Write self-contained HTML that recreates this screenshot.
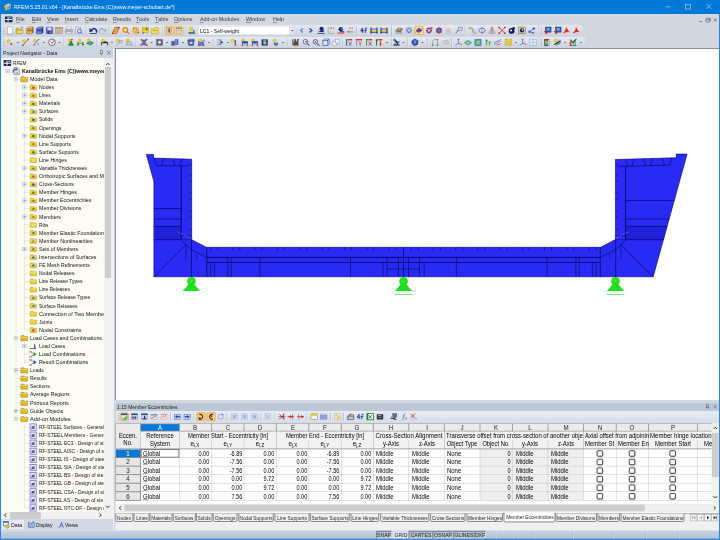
<!DOCTYPE html>
<html><head><meta charset="utf-8"><title>RFEM</title>
<style>
html,body{margin:0;padding:0;}
body{width:720px;height:540px;overflow:hidden;position:relative;background:#d2d6df;font-family:"Liberation Sans",sans-serif;font-size:6.2px;color:#1a1a1a;}
.b{position:absolute;box-sizing:border-box;}
.t{position:absolute;white-space:pre;line-height:8px;height:8px;transform-origin:0 0;transform:scaleX(0.88);font-size:6.1px;color:#111;}
.a{transform:none;}
svg{position:absolute;left:0;top:0;overflow:visible;}
u{text-decoration:none;border-bottom:1px solid rgba(0,0,0,.32);display:inline-block;line-height:0.8em;}
.sb{font-size:4.6px;position:relative;top:1px;}
</style></head><body><div id="root" style="position:absolute;left:0;top:0;width:720px;height:540px;overflow:hidden;will-change:transform">

<div class="b" style="left:0px;top:0px;width:720px;height:14px;background:#0078d7;"></div>
<div class="t " style="left:13.7px;top:2.6px;transform:scaleX(0.857);color:#fff;">RFEM 5.25.01 x64 - [Kanalbrücke Ems (C))www.meyer-schubart.de*]</div>
<div class="b" style="left:0px;top:14px;width:720px;height:11px;background:#d3d7e0;"></div>
<div class="t " style="left:16px;top:15.2px;color:#383838;"><u>F</u>ile</div>
<div class="t " style="left:31.5px;top:15.2px;color:#383838;"><u>E</u>dit</div>
<div class="t " style="left:47px;top:15.2px;color:#383838;"><u>V</u>iew</div>
<div class="t " style="left:65px;top:15.2px;color:#383838;"><u>I</u>nsert</div>
<div class="t " style="left:85px;top:15.2px;color:#383838;"><u>C</u>alculate</div>
<div class="t " style="left:113px;top:15.2px;color:#383838;"><u>R</u>esults</div>
<div class="t " style="left:136px;top:15.2px;color:#383838;"><u>T</u>ools</div>
<div class="t " style="left:155px;top:15.2px;color:#383838;"><u>T</u>able</div>
<div class="t " style="left:174px;top:15.2px;color:#383838;"><u>O</u>ptions</div>
<div class="t " style="left:200px;top:15.2px;color:#383838;"><u>A</u>dd-on Modules</div>
<div class="t " style="left:246px;top:15.2px;color:#383838;"><u>W</u>indow</div>
<div class="t " style="left:272.5px;top:15.2px;color:#383838;"><u>H</u>elp</div>
<div class="b" style="left:0px;top:25px;width:720px;height:23px;background:#d2d6df;"></div>
<svg width="720" height="540" viewBox="0 0 720 540"><g stroke="#fff" stroke-width="0.5" fill="none" stroke-opacity="0.9"><path d="M665.5 6.8 H670.5"/><rect x="685.6" y="4.2" width="4.8" height="4.8"/><path d="M706.4 4 L711.4 9 M711.4 4 L706.4 9"/></g><path d="M5.4 5 L8.4 3.4 L11 5 L10.6 8.6 L7.6 10.4 L5 8.6Z" fill="#9a9ea8"/><path d="M5.4 5 L8.4 3.4 L11 5 L8 6.4Z" fill="#c4c8d0"/><path d="M8.6 5.6 q1.4 0.6 0.4 2.4" stroke="#5a7ac8" stroke-width="0.8" fill="none"/><path d="M4.4 6.4 q1.8 -1.2 2.4 0.6 q0.2 2 -2 3.2" stroke="#e8c020" stroke-width="1.1" fill="none"/><circle cx="5" cy="6.8" r="0.9" fill="#f0d040"/><rect x="5" y="16.4" width="7.4" height="5.8" rx="0.5" fill="#1a2060"/><rect x="5.4" y="19" width="6.6" height="0.9" fill="#fff"/><rect x="7.6" y="16.8" width="0.9" height="5" fill="#fff"/><rect x="9.3" y="17.2" width="2" height="1.1" fill="#c8cce8"/><g stroke="#555" stroke-width="0.6" fill="none"><path d="M699.2 21.6 H702.2"/><rect x="706" y="19.2" width="3.2" height="2.8"/><path d="M707 19.2 V18.2 H710.4 V21 H709.2"/><path d="M713.6 18.4 L716.8 21.8 M716.8 18.4 L713.6 21.8"/></g></svg>
<!--ICONS-->
<div class="t " style="left:200px;top:26.6px;transform:scaleX(0.835);color:#111;z-index:5;">LC1 - Self-weight</div>
<div class="b" style="left:1px;top:48px;width:112px;height:9.5px;background:#cdd5e2;"></div>
<div class="t " style="left:2.5px;top:49.2px;transform:scaleX(0.835);color:#222;">Project Navigator - Data</div>
<div class="b" style="left:1px;top:57.5px;width:103.2px;height:454px;background:#fcfbf4;"></div>
<div class="b" style="left:104.2px;top:57.5px;width:8.5px;height:461.5px;background:#f0f0f0;"></div>
<div class="b" style="left:112.7px;top:48.5px;width:0.8px;height:482px;background:#e6ebf4;"></div>
<div class="b" style="left:104.6px;top:67px;width:6.3px;height:211px;background:#cdcdcd;"></div>
<div class="b" style="left:1px;top:511.5px;width:111.6px;height:7.5px;background:#f0f0f0;"></div>
<div class="b" style="left:9.6px;top:512px;width:31px;height:6.5px;background:#cdcdcd;"></div>
<div class="b" style="left:1px;top:57.5px;width:103.2px;height:454px;overflow:hidden">
<div class="t" style="left:12.2px;top:1.30px;transform:scaleX(0.782);">RFEM</div>
<div class="t" style="left:20.7px;top:9.39px;transform:scaleX(0.855);font-weight:bold;">Kanalbrücke Ems (C))www.meyer</div>
<div class="t" style="left:29px;top:17.48px;transform:scaleX(0.882);">Model Data</div>
<div class="t" style="left:37.8px;top:25.57px;transform:scaleX(0.851);">Nodes</div>
<div class="t" style="left:37.8px;top:33.66px;transform:scaleX(0.803);">Lines</div>
<div class="t" style="left:37.8px;top:41.75px;transform:scaleX(0.857);">Materials</div>
<div class="t" style="left:37.8px;top:49.84px;transform:scaleX(0.810);">Surfaces</div>
<div class="t" style="left:37.8px;top:57.93px;transform:scaleX(0.825);">Solids</div>
<div class="t" style="left:37.8px;top:66.02px;transform:scaleX(0.862);">Openings</div>
<div class="t" style="left:37.8px;top:74.11px;transform:scaleX(0.869);">Nodal Supports</div>
<div class="t" style="left:37.8px;top:82.20px;transform:scaleX(0.851);">Line Supports</div>
<div class="t" style="left:37.8px;top:90.29px;transform:scaleX(0.847);">Surface Supports</div>
<div class="t" style="left:37.8px;top:98.38px;transform:scaleX(0.867);">Line Hinges</div>
<div class="t" style="left:37.8px;top:106.47px;transform:scaleX(0.835);">Variable Thicknesses</div>
<div class="t" style="left:37.8px;top:114.56px;transform:scaleX(0.872);">Orthotropic Surfaces and M</div>
<div class="t" style="left:37.8px;top:122.65px;transform:scaleX(0.844);">Cross-Sections</div>
<div class="t" style="left:37.8px;top:130.74px;transform:scaleX(0.881);">Member Hinges</div>
<div class="t" style="left:37.8px;top:138.83px;transform:scaleX(0.876);">Member Eccentricities</div>
<div class="t" style="left:37.8px;top:146.92px;transform:scaleX(0.875);">Member Divisions</div>
<div class="t" style="left:37.8px;top:155.01px;transform:scaleX(0.866);">Members</div>
<div class="t" style="left:37.8px;top:163.10px;transform:scaleX(0.778);">Ribs</div>
<div class="t" style="left:37.8px;top:171.19px;transform:scaleX(0.875);">Member Elastic Foundation</div>
<div class="t" style="left:37.8px;top:179.28px;transform:scaleX(0.881);">Member Nonlinearities</div>
<div class="t" style="left:37.8px;top:187.37px;transform:scaleX(0.851);">Sets of Members</div>
<div class="t" style="left:37.8px;top:195.46px;transform:scaleX(0.856);">Intersections of Surfaces</div>
<div class="t" style="left:37.8px;top:203.55px;transform:scaleX(0.841);">FE Mesh Refinements</div>
<div class="t" style="left:37.8px;top:211.64px;transform:scaleX(0.823);">Nodal Releases</div>
<div class="t" style="left:37.8px;top:219.73px;transform:scaleX(0.812);">Line Release Types</div>
<div class="t" style="left:37.8px;top:227.82px;transform:scaleX(0.800);">Line Releases</div>
<div class="t" style="left:37.8px;top:235.91px;transform:scaleX(0.814);">Surface Release Types</div>
<div class="t" style="left:37.8px;top:244.00px;transform:scaleX(0.798);">Surface Releases</div>
<div class="t" style="left:37.8px;top:252.09px;transform:scaleX(0.898);">Connection of Two Membe</div>
<div class="t" style="left:37.8px;top:260.18px;transform:scaleX(0.829);">Joints</div>
<div class="t" style="left:37.8px;top:268.27px;transform:scaleX(0.877);">Nodal Constraints</div>
<div class="t" style="left:29px;top:276.36px;transform:scaleX(0.864);">Load Cases and Combinations</div>
<div class="t" style="left:37.8px;top:284.45px;transform:scaleX(0.805);">Load Cases</div>
<div class="t" style="left:37.8px;top:292.54px;transform:scaleX(0.885);">Load Combinations</div>
<div class="t" style="left:37.8px;top:300.63px;transform:scaleX(0.875);">Result Combinations</div>
<div class="t" style="left:29px;top:308.72px;transform:scaleX(0.831);">Loads</div>
<div class="t" style="left:29px;top:316.81px;transform:scaleX(0.822);">Results</div>
<div class="t" style="left:29px;top:324.90px;transform:scaleX(0.843);">Sections</div>
<div class="t" style="left:29px;top:332.99px;transform:scaleX(0.851);">Average Regions</div>
<div class="t" style="left:29px;top:341.08px;transform:scaleX(0.879);">Printout Reports</div>
<div class="t" style="left:29px;top:349.17px;transform:scaleX(0.862);">Guide Objects</div>
<div class="t" style="left:29px;top:357.26px;transform:scaleX(0.915);">Add-on Modules</div>
<div class="t" style="left:37.8px;top:365.35px;transform:scaleX(0.790);">RF-STEEL Surfaces - General s</div>
<div class="t" style="left:37.8px;top:373.44px;transform:scaleX(0.820);">RF-STEEL Members - General</div>
<div class="t" style="left:37.8px;top:381.53px;transform:scaleX(0.805);">RF-STEEL EC3 - Design of st</div>
<div class="t" style="left:37.8px;top:389.62px;transform:scaleX(0.805);">RF-STEEL AISC - Design of s</div>
<div class="t" style="left:37.8px;top:397.71px;transform:scaleX(0.805);">RF-STEEL IS - Design of stee</div>
<div class="t" style="left:37.8px;top:405.80px;transform:scaleX(0.805);">RF-STEEL SIA - Design of ste</div>
<div class="t" style="left:37.8px;top:413.89px;transform:scaleX(0.805);">RF-STEEL BS - Design of ste</div>
<div class="t" style="left:37.8px;top:421.98px;transform:scaleX(0.805);">RF-STEEL GB - Design of ste</div>
<div class="t" style="left:37.8px;top:430.07px;transform:scaleX(0.805);">RF-STEEL CSA - Design of st</div>
<div class="t" style="left:37.8px;top:438.16px;transform:scaleX(0.805);">RF-STEEL AS - Design of ste</div>
<div class="t" style="left:37.8px;top:446.25px;transform:scaleX(0.805);">RF-STEEL NTC-DF - Design o</div>
</div>
<div class="b" style="left:1px;top:519px;width:112px;height:11.5px;background:#d2d8e4;"></div>
<div class="b" style="left:2px;top:519.6px;width:22px;height:9.8px;background:#e9edf4;"></div>
<div class="t " style="left:10.5px;top:520.8px;">Data</div>
<div class="t " style="left:35.5px;top:520.8px;transform:scaleX(0.820);">Display</div>
<div class="t " style="left:64.5px;top:520.8px;transform:scaleX(0.810);">Views</div>
<svg width="720" height="540" viewBox="0 0 720 540">
<line x1="7.6" y1="67.0" x2="7.6" y2="71.1" stroke="#b0b0a8" stroke-width="0.5" stroke-dasharray="0.5 0.5"/>
<line x1="16" y1="75.1" x2="16" y2="419.0" stroke="#b0b0a8" stroke-width="0.5" stroke-dasharray="0.5 0.5"/>
<line x1="16" y1="79.2" x2="20.6" y2="79.2" stroke="#b0b0a8" stroke-width="0.5" stroke-dasharray="0.5 0.5"/>
<line x1="16" y1="338.1" x2="20.6" y2="338.1" stroke="#b0b0a8" stroke-width="0.5" stroke-dasharray="0.5 0.5"/>
<line x1="16" y1="370.4" x2="20.6" y2="370.4" stroke="#b0b0a8" stroke-width="0.5" stroke-dasharray="0.5 0.5"/>
<line x1="16" y1="378.5" x2="20.6" y2="378.5" stroke="#b0b0a8" stroke-width="0.5" stroke-dasharray="0.5 0.5"/>
<line x1="16" y1="386.6" x2="20.6" y2="386.6" stroke="#b0b0a8" stroke-width="0.5" stroke-dasharray="0.5 0.5"/>
<line x1="16" y1="394.7" x2="20.6" y2="394.7" stroke="#b0b0a8" stroke-width="0.5" stroke-dasharray="0.5 0.5"/>
<line x1="16" y1="402.8" x2="20.6" y2="402.8" stroke="#b0b0a8" stroke-width="0.5" stroke-dasharray="0.5 0.5"/>
<line x1="16" y1="410.9" x2="20.6" y2="410.9" stroke="#b0b0a8" stroke-width="0.5" stroke-dasharray="0.5 0.5"/>
<line x1="16" y1="419.0" x2="20.6" y2="419.0" stroke="#b0b0a8" stroke-width="0.5" stroke-dasharray="0.5 0.5"/>
<line x1="24.4" y1="83.2" x2="24.4" y2="330.0" stroke="#b0b0a8" stroke-width="0.5" stroke-dasharray="0.5 0.5"/>
<line x1="24.4" y1="87.3" x2="29.5" y2="87.3" stroke="#b0b0a8" stroke-width="0.5" stroke-dasharray="0.5 0.5"/>
<line x1="24.4" y1="95.4" x2="29.5" y2="95.4" stroke="#b0b0a8" stroke-width="0.5" stroke-dasharray="0.5 0.5"/>
<line x1="24.4" y1="103.5" x2="29.5" y2="103.5" stroke="#b0b0a8" stroke-width="0.5" stroke-dasharray="0.5 0.5"/>
<line x1="24.4" y1="111.5" x2="29.5" y2="111.5" stroke="#b0b0a8" stroke-width="0.5" stroke-dasharray="0.5 0.5"/>
<line x1="24.4" y1="119.6" x2="29.5" y2="119.6" stroke="#b0b0a8" stroke-width="0.5" stroke-dasharray="0.5 0.5"/>
<line x1="24.4" y1="127.7" x2="29.5" y2="127.7" stroke="#b0b0a8" stroke-width="0.5" stroke-dasharray="0.5 0.5"/>
<line x1="24.4" y1="135.8" x2="29.5" y2="135.8" stroke="#b0b0a8" stroke-width="0.5" stroke-dasharray="0.5 0.5"/>
<line x1="24.4" y1="143.9" x2="29.5" y2="143.9" stroke="#b0b0a8" stroke-width="0.5" stroke-dasharray="0.5 0.5"/>
<line x1="24.4" y1="152.0" x2="29.5" y2="152.0" stroke="#b0b0a8" stroke-width="0.5" stroke-dasharray="0.5 0.5"/>
<line x1="24.4" y1="160.1" x2="29.5" y2="160.1" stroke="#b0b0a8" stroke-width="0.5" stroke-dasharray="0.5 0.5"/>
<line x1="24.4" y1="168.2" x2="29.5" y2="168.2" stroke="#b0b0a8" stroke-width="0.5" stroke-dasharray="0.5 0.5"/>
<line x1="24.4" y1="176.3" x2="29.5" y2="176.3" stroke="#b0b0a8" stroke-width="0.5" stroke-dasharray="0.5 0.5"/>
<line x1="24.4" y1="184.3" x2="29.5" y2="184.3" stroke="#b0b0a8" stroke-width="0.5" stroke-dasharray="0.5 0.5"/>
<line x1="24.4" y1="192.4" x2="29.5" y2="192.4" stroke="#b0b0a8" stroke-width="0.5" stroke-dasharray="0.5 0.5"/>
<line x1="24.4" y1="200.5" x2="29.5" y2="200.5" stroke="#b0b0a8" stroke-width="0.5" stroke-dasharray="0.5 0.5"/>
<line x1="24.4" y1="208.6" x2="29.5" y2="208.6" stroke="#b0b0a8" stroke-width="0.5" stroke-dasharray="0.5 0.5"/>
<line x1="24.4" y1="216.7" x2="29.5" y2="216.7" stroke="#b0b0a8" stroke-width="0.5" stroke-dasharray="0.5 0.5"/>
<line x1="24.4" y1="224.8" x2="29.5" y2="224.8" stroke="#b0b0a8" stroke-width="0.5" stroke-dasharray="0.5 0.5"/>
<line x1="24.4" y1="232.9" x2="29.5" y2="232.9" stroke="#b0b0a8" stroke-width="0.5" stroke-dasharray="0.5 0.5"/>
<line x1="24.4" y1="241.0" x2="29.5" y2="241.0" stroke="#b0b0a8" stroke-width="0.5" stroke-dasharray="0.5 0.5"/>
<line x1="24.4" y1="249.1" x2="29.5" y2="249.1" stroke="#b0b0a8" stroke-width="0.5" stroke-dasharray="0.5 0.5"/>
<line x1="24.4" y1="257.2" x2="29.5" y2="257.2" stroke="#b0b0a8" stroke-width="0.5" stroke-dasharray="0.5 0.5"/>
<line x1="24.4" y1="265.2" x2="29.5" y2="265.2" stroke="#b0b0a8" stroke-width="0.5" stroke-dasharray="0.5 0.5"/>
<line x1="24.4" y1="273.3" x2="29.5" y2="273.3" stroke="#b0b0a8" stroke-width="0.5" stroke-dasharray="0.5 0.5"/>
<line x1="24.4" y1="281.4" x2="29.5" y2="281.4" stroke="#b0b0a8" stroke-width="0.5" stroke-dasharray="0.5 0.5"/>
<line x1="24.4" y1="289.5" x2="29.5" y2="289.5" stroke="#b0b0a8" stroke-width="0.5" stroke-dasharray="0.5 0.5"/>
<line x1="24.4" y1="297.6" x2="29.5" y2="297.6" stroke="#b0b0a8" stroke-width="0.5" stroke-dasharray="0.5 0.5"/>
<line x1="24.4" y1="305.7" x2="29.5" y2="305.7" stroke="#b0b0a8" stroke-width="0.5" stroke-dasharray="0.5 0.5"/>
<line x1="24.4" y1="313.8" x2="29.5" y2="313.8" stroke="#b0b0a8" stroke-width="0.5" stroke-dasharray="0.5 0.5"/>
<line x1="24.4" y1="321.9" x2="29.5" y2="321.9" stroke="#b0b0a8" stroke-width="0.5" stroke-dasharray="0.5 0.5"/>
<line x1="24.4" y1="330.0" x2="29.5" y2="330.0" stroke="#b0b0a8" stroke-width="0.5" stroke-dasharray="0.5 0.5"/>
<line x1="24.4" y1="342.1" x2="24.4" y2="362.3" stroke="#b0b0a8" stroke-width="0.5" stroke-dasharray="0.5 0.5"/>
<line x1="24.4" y1="346.1" x2="29.5" y2="346.1" stroke="#b0b0a8" stroke-width="0.5" stroke-dasharray="0.5 0.5"/>
<line x1="24.4" y1="354.2" x2="29.5" y2="354.2" stroke="#b0b0a8" stroke-width="0.5" stroke-dasharray="0.5 0.5"/>
<line x1="24.4" y1="362.3" x2="29.5" y2="362.3" stroke="#b0b0a8" stroke-width="0.5" stroke-dasharray="0.5 0.5"/>
<line x1="24.4" y1="423.0" x2="24.4" y2="507.9" stroke="#b0b0a8" stroke-width="0.5" stroke-dasharray="0.5 0.5"/>
<line x1="24.4" y1="427.1" x2="29.5" y2="427.1" stroke="#b0b0a8" stroke-width="0.5" stroke-dasharray="0.5 0.5"/>
<line x1="24.4" y1="435.1" x2="29.5" y2="435.1" stroke="#b0b0a8" stroke-width="0.5" stroke-dasharray="0.5 0.5"/>
<line x1="24.4" y1="443.2" x2="29.5" y2="443.2" stroke="#b0b0a8" stroke-width="0.5" stroke-dasharray="0.5 0.5"/>
<line x1="24.4" y1="451.3" x2="29.5" y2="451.3" stroke="#b0b0a8" stroke-width="0.5" stroke-dasharray="0.5 0.5"/>
<line x1="24.4" y1="459.4" x2="29.5" y2="459.4" stroke="#b0b0a8" stroke-width="0.5" stroke-dasharray="0.5 0.5"/>
<line x1="24.4" y1="467.5" x2="29.5" y2="467.5" stroke="#b0b0a8" stroke-width="0.5" stroke-dasharray="0.5 0.5"/>
<line x1="24.4" y1="475.6" x2="29.5" y2="475.6" stroke="#b0b0a8" stroke-width="0.5" stroke-dasharray="0.5 0.5"/>
<line x1="24.4" y1="483.7" x2="29.5" y2="483.7" stroke="#b0b0a8" stroke-width="0.5" stroke-dasharray="0.5 0.5"/>
<line x1="24.4" y1="491.8" x2="29.5" y2="491.8" stroke="#b0b0a8" stroke-width="0.5" stroke-dasharray="0.5 0.5"/>
<line x1="24.4" y1="499.9" x2="29.5" y2="499.9" stroke="#b0b0a8" stroke-width="0.5" stroke-dasharray="0.5 0.5"/>
<line x1="24.4" y1="507.9" x2="29.5" y2="507.9" stroke="#b0b0a8" stroke-width="0.5" stroke-dasharray="0.5 0.5"/>
<line x1="7.6" y1="71.1" x2="12.6" y2="71.1" stroke="#b0b0a8" stroke-width="0.5" stroke-dasharray="0.5 0.5"/>
<rect x="3.6" y="60.0" width="7.6" height="6.0" fill="#1a2060" rx="0.5"/>
<rect x="4.0" y="62.7" width="6.8" height="1.0" fill="#fff" />
<rect x="6.5" y="60.4" width="1.0" height="5.2" fill="#fff" />
<rect x="8.3" y="60.7" width="2.0" height="1.2" fill="#c8cce8" />
<rect x="5.9" y="69.4" width="3.4" height="3.4" fill="#f6f8fc" stroke="#aab4c8" stroke-width="0.5"/><line x1="6.7" y1="71.1" x2="8.5" y2="71.1" stroke="#4a5aa0" stroke-width="0.5"/>
<polygon points="14.0,67.5 18.0,67.5 19.4,68.9 19.4,74.7 14.0,74.7" fill="#dcdde6" stroke="#6a6e7a" stroke-width="0.5"/>
<path d="M13 72.69 Q13 68.89 16.4 69.29" fill="none" stroke="#2a4ab0" stroke-width="1.1"/>
<polygon points="15.8,67.7 17.8,69.5 15.6,70.9" fill="#2a4ab0" stroke="none" stroke-width="0.6"/>
<rect x="15.6" y="72.1" width="2.6" height="0.5" fill="#8a8e9a" />
<rect x="15.6" y="73.3" width="2.6" height="0.5" fill="#8a8e9a" />
<rect x="14.3" y="77.5" width="3.4" height="3.4" fill="#f6f8fc" stroke="#aab4c8" stroke-width="0.5"/><line x1="15.1" y1="79.2" x2="16.9" y2="79.2" stroke="#4a5aa0" stroke-width="0.5"/>
<polygon points="20.8,77.5 21.4,76.6 23.7,76.6 24.2,77.5 27.6,77.5 27.6,81.8 20.8,81.8" fill="#e2b826" stroke="#8a6c10" stroke-width="0.4"/><rect x="21.2" y="78.1" width="6.0" height="0.5" fill="#fbeea0" />
<rect x="22.7" y="85.6" width="3.4" height="3.4" fill="#f6f8fc" stroke="#aab4c8" stroke-width="0.5"/><line x1="23.5" y1="87.3" x2="25.3" y2="87.3" stroke="#4a5aa0" stroke-width="0.5"/><line x1="24.4" y1="86.4" x2="24.4" y2="88.2" stroke="#4a5aa0" stroke-width="0.5"/>
<polygon points="30.2,85.7 30.8,84.8 32.8,84.8 33.4,85.7 36.5,85.7 36.5,89.7 30.2,89.7" fill="#f0d030" stroke="#a08414" stroke-width="0.4"/><rect x="30.6" y="86.3" width="5.5" height="0.5" fill="#fbeea0" />
<rect x="32.2" y="86.5" width="2.4" height="2.2" fill="#e03030" rx="0.5"/>
<rect x="22.7" y="93.7" width="3.4" height="3.4" fill="#f6f8fc" stroke="#aab4c8" stroke-width="0.5"/><line x1="23.5" y1="95.4" x2="25.3" y2="95.4" stroke="#4a5aa0" stroke-width="0.5"/><line x1="24.4" y1="94.5" x2="24.4" y2="96.3" stroke="#4a5aa0" stroke-width="0.5"/>
<polygon points="30.2,93.8 30.8,92.9 32.8,92.9 33.4,93.8 36.5,93.8 36.5,97.8 30.2,97.8" fill="#f0d030" stroke="#a08414" stroke-width="0.4"/><rect x="30.6" y="94.4" width="5.5" height="0.5" fill="#fbeea0" />
<rect x="32.2" y="94.6" width="2.4" height="2.2" fill="#c07020" rx="0.5"/>
<rect x="22.7" y="101.8" width="3.4" height="3.4" fill="#f6f8fc" stroke="#aab4c8" stroke-width="0.5"/><line x1="23.5" y1="103.5" x2="25.3" y2="103.5" stroke="#4a5aa0" stroke-width="0.5"/><line x1="24.4" y1="102.5" x2="24.4" y2="104.4" stroke="#4a5aa0" stroke-width="0.5"/>
<polygon points="30.2,101.9 30.8,101.0 32.8,101.0 33.4,101.9 36.5,101.9 36.5,105.9 30.2,105.9" fill="#f0d030" stroke="#a08414" stroke-width="0.4"/><rect x="30.6" y="102.5" width="5.5" height="0.5" fill="#fbeea0" />
<rect x="32.2" y="102.7" width="2.4" height="2.2" fill="#3a8a3a" rx="0.5"/>
<rect x="22.7" y="109.8" width="3.4" height="3.4" fill="#f6f8fc" stroke="#aab4c8" stroke-width="0.5"/><line x1="23.5" y1="111.5" x2="25.3" y2="111.5" stroke="#4a5aa0" stroke-width="0.5"/><line x1="24.4" y1="110.6" x2="24.4" y2="112.4" stroke="#4a5aa0" stroke-width="0.5"/>
<polygon points="30.2,110.0 30.8,109.1 32.8,109.1 33.4,110.0 36.5,110.0 36.5,114.0 30.2,114.0" fill="#f0d030" stroke="#a08414" stroke-width="0.4"/><rect x="30.6" y="110.6" width="5.5" height="0.5" fill="#fbeea0" />
<rect x="32.2" y="110.7" width="2.4" height="2.2" fill="#4a8ad8" rx="0.5"/>
<polygon points="30.2,118.1 30.8,117.2 32.8,117.2 33.4,118.1 36.5,118.1 36.5,122.1 30.2,122.1" fill="#f0d030" stroke="#a08414" stroke-width="0.4"/><rect x="30.6" y="118.7" width="5.5" height="0.5" fill="#fbeea0" />
<rect x="32.2" y="118.8" width="2.4" height="2.2" fill="#3a5ab8" rx="0.5"/>
<polygon points="30.2,126.2 30.8,125.3 32.8,125.3 33.4,126.2 36.5,126.2 36.5,130.2 30.2,130.2" fill="#f0d030" stroke="#a08414" stroke-width="0.4"/><rect x="30.6" y="126.8" width="5.5" height="0.5" fill="#fbeea0" />
<rect x="32.2" y="126.9" width="2.4" height="2.2" fill="#6a7a8a" rx="0.5"/>
<rect x="22.7" y="134.1" width="3.4" height="3.4" fill="#f6f8fc" stroke="#aab4c8" stroke-width="0.5"/><line x1="23.5" y1="135.8" x2="25.3" y2="135.8" stroke="#4a5aa0" stroke-width="0.5"/><line x1="24.4" y1="134.9" x2="24.4" y2="136.7" stroke="#4a5aa0" stroke-width="0.5"/>
<polygon points="30.2,134.3 30.8,133.4 32.8,133.4 33.4,134.3 36.5,134.3 36.5,138.3 30.2,138.3" fill="#f0d030" stroke="#a08414" stroke-width="0.4"/><rect x="30.6" y="134.9" width="5.5" height="0.5" fill="#fbeea0" />
<rect x="32.2" y="135.0" width="2.4" height="2.2" fill="#2a8a2a" rx="0.5"/>
<polygon points="30.2,142.4 30.8,141.5 32.8,141.5 33.4,142.4 36.5,142.4 36.5,146.4 30.2,146.4" fill="#f0d030" stroke="#a08414" stroke-width="0.4"/><rect x="30.6" y="143.0" width="5.5" height="0.5" fill="#fbeea0" />
<rect x="32.2" y="143.1" width="2.4" height="2.2" fill="#c08a20" rx="0.5"/>
<polygon points="30.2,150.4 30.8,149.5 32.8,149.5 33.4,150.4 36.5,150.4 36.5,154.4 30.2,154.4" fill="#f0d030" stroke="#a08414" stroke-width="0.4"/><rect x="30.6" y="151.0" width="5.5" height="0.5" fill="#fbeea0" />
<rect x="32.2" y="151.2" width="2.4" height="2.2" fill="#2a7a4a" rx="0.5"/>
<polygon points="30.2,158.5 30.8,157.6 32.8,157.6 33.4,158.5 36.5,158.5 36.5,162.5 30.2,162.5" fill="#f0d030" stroke="#a08414" stroke-width="0.4"/><rect x="30.6" y="159.1" width="5.5" height="0.5" fill="#fbeea0" />
<rect x="32.2" y="159.3" width="2.4" height="2.2" fill="#f0e080" rx="0.5"/>
<rect x="22.7" y="166.5" width="3.4" height="3.4" fill="#f6f8fc" stroke="#aab4c8" stroke-width="0.5"/><line x1="23.5" y1="168.2" x2="25.3" y2="168.2" stroke="#4a5aa0" stroke-width="0.5"/><line x1="24.4" y1="167.3" x2="24.4" y2="169.1" stroke="#4a5aa0" stroke-width="0.5"/>
<polygon points="30.2,166.6 30.8,165.7 32.8,165.7 33.4,166.6 36.5,166.6 36.5,170.6 30.2,170.6" fill="#f0d030" stroke="#a08414" stroke-width="0.4"/><rect x="30.6" y="167.2" width="5.5" height="0.5" fill="#fbeea0" />
<rect x="32.2" y="167.4" width="2.4" height="2.2" fill="#5a7ab8" rx="0.5"/>
<polygon points="30.2,174.7 30.8,173.8 32.8,173.8 33.4,174.7 36.5,174.7 36.5,178.7 30.2,178.7" fill="#f0d030" stroke="#a08414" stroke-width="0.4"/><rect x="30.6" y="175.3" width="5.5" height="0.5" fill="#fbeea0" />
<rect x="32.2" y="175.5" width="2.4" height="2.2" fill="#c05a3a" rx="0.5"/>
<rect x="22.7" y="182.7" width="3.4" height="3.4" fill="#f6f8fc" stroke="#aab4c8" stroke-width="0.5"/><line x1="23.5" y1="184.3" x2="25.3" y2="184.3" stroke="#4a5aa0" stroke-width="0.5"/><line x1="24.4" y1="183.4" x2="24.4" y2="185.2" stroke="#4a5aa0" stroke-width="0.5"/>
<polygon points="30.2,182.8 30.8,181.9 32.8,181.9 33.4,182.8 36.5,182.8 36.5,186.8 30.2,186.8" fill="#f0d030" stroke="#a08414" stroke-width="0.4"/><rect x="30.6" y="183.4" width="5.5" height="0.5" fill="#fbeea0" />
<rect x="32.2" y="183.5" width="2.4" height="2.2" fill="#3a4ab8" rx="0.5"/>
<polygon points="30.2,190.9 30.8,190.0 32.8,190.0 33.4,190.9 36.5,190.9 36.5,194.9 30.2,194.9" fill="#f0d030" stroke="#a08414" stroke-width="0.4"/><rect x="30.6" y="191.5" width="5.5" height="0.5" fill="#fbeea0" />
<rect x="32.2" y="191.6" width="2.4" height="2.2" fill="#8a6a2a" rx="0.5"/>
<rect x="22.7" y="198.8" width="3.4" height="3.4" fill="#f6f8fc" stroke="#aab4c8" stroke-width="0.5"/><line x1="23.5" y1="200.5" x2="25.3" y2="200.5" stroke="#4a5aa0" stroke-width="0.5"/><line x1="24.4" y1="199.6" x2="24.4" y2="201.4" stroke="#4a5aa0" stroke-width="0.5"/>
<polygon points="30.2,199.0 30.8,198.1 32.8,198.1 33.4,199.0 36.5,199.0 36.5,203.0 30.2,203.0" fill="#f0d030" stroke="#a08414" stroke-width="0.4"/><rect x="30.6" y="199.6" width="5.5" height="0.5" fill="#fbeea0" />
<rect x="32.2" y="199.7" width="2.4" height="2.2" fill="#c07a2a" rx="0.5"/>
<polygon points="30.2,207.1 30.8,206.2 32.8,206.2 33.4,207.1 36.5,207.1 36.5,211.1 30.2,211.1" fill="#f0d030" stroke="#a08414" stroke-width="0.4"/><rect x="30.6" y="207.7" width="5.5" height="0.5" fill="#fbeea0" />
<rect x="32.2" y="207.8" width="2.4" height="2.2" fill="#c07a2a" rx="0.5"/>
<rect x="22.7" y="215.0" width="3.4" height="3.4" fill="#f6f8fc" stroke="#aab4c8" stroke-width="0.5"/><line x1="23.5" y1="216.7" x2="25.3" y2="216.7" stroke="#4a5aa0" stroke-width="0.5"/><line x1="24.4" y1="215.8" x2="24.4" y2="217.6" stroke="#4a5aa0" stroke-width="0.5"/>
<polygon points="30.2,215.2 30.8,214.3 32.8,214.3 33.4,215.2 36.5,215.2 36.5,219.2 30.2,219.2" fill="#f0d030" stroke="#a08414" stroke-width="0.4"/><rect x="30.6" y="215.8" width="5.5" height="0.5" fill="#fbeea0" />
<rect x="32.2" y="215.9" width="2.4" height="2.2" fill="#c08a2a" rx="0.5"/>
<polygon points="30.2,223.3 30.8,222.4 32.8,222.4 33.4,223.3 36.5,223.3 36.5,227.3 30.2,227.3" fill="#f0d030" stroke="#a08414" stroke-width="0.4"/><rect x="30.6" y="223.9" width="5.5" height="0.5" fill="#fbeea0" />
<rect x="32.2" y="224.0" width="2.4" height="2.2" fill="#f0e090" rx="0.5"/>
<polygon points="30.2,231.3 30.8,230.4 32.8,230.4 33.4,231.3 36.5,231.3 36.5,235.3 30.2,235.3" fill="#f0d030" stroke="#a08414" stroke-width="0.4"/><rect x="30.6" y="231.9" width="5.5" height="0.5" fill="#fbeea0" />
<rect x="32.2" y="232.1" width="2.4" height="2.2" fill="#6a8a4a" rx="0.5"/>
<polygon points="30.2,239.4 30.8,238.5 32.8,238.5 33.4,239.4 36.5,239.4 36.5,243.4 30.2,243.4" fill="#f0d030" stroke="#a08414" stroke-width="0.4"/><rect x="30.6" y="240.0" width="5.5" height="0.5" fill="#fbeea0" />
<rect x="32.2" y="240.2" width="2.4" height="2.2" fill="#c09a3a" rx="0.5"/>
<rect x="22.7" y="247.4" width="3.4" height="3.4" fill="#f6f8fc" stroke="#aab4c8" stroke-width="0.5"/><line x1="23.5" y1="249.1" x2="25.3" y2="249.1" stroke="#4a5aa0" stroke-width="0.5"/><line x1="24.4" y1="248.2" x2="24.4" y2="250.0" stroke="#4a5aa0" stroke-width="0.5"/>
<polygon points="30.2,247.5 30.8,246.6 32.8,246.6 33.4,247.5 36.5,247.5 36.5,251.5 30.2,251.5" fill="#f0d030" stroke="#a08414" stroke-width="0.4"/><rect x="30.6" y="248.1" width="5.5" height="0.5" fill="#fbeea0" />
<rect x="32.2" y="248.3" width="2.4" height="2.2" fill="#b0702a" rx="0.5"/>
<polygon points="30.2,255.6 30.8,254.7 32.8,254.7 33.4,255.6 36.5,255.6 36.5,259.6 30.2,259.6" fill="#f0d030" stroke="#a08414" stroke-width="0.4"/><rect x="30.6" y="256.2" width="5.5" height="0.5" fill="#fbeea0" />
<rect x="32.2" y="256.4" width="2.4" height="2.2" fill="#3a5ac8" rx="0.5"/>
<polygon points="30.2,263.7 30.8,262.8 32.8,262.8 33.4,263.7 36.5,263.7 36.5,267.7 30.2,267.7" fill="#f0d030" stroke="#a08414" stroke-width="0.4"/><rect x="30.6" y="264.3" width="5.5" height="0.5" fill="#fbeea0" />
<rect x="32.2" y="264.4" width="2.4" height="2.2" fill="#4a6a8a" rx="0.5"/>
<polygon points="30.2,271.8 30.8,270.9 32.8,270.9 33.4,271.8 36.5,271.8 36.5,275.8 30.2,275.8" fill="#f0d030" stroke="#a08414" stroke-width="0.4"/><rect x="30.6" y="272.4" width="5.5" height="0.5" fill="#fbeea0" />
<polygon points="30.2,279.9 30.8,279.0 32.8,279.0 33.4,279.9 36.5,279.9 36.5,283.9 30.2,283.9" fill="#f0d030" stroke="#a08414" stroke-width="0.4"/><rect x="30.6" y="280.5" width="5.5" height="0.5" fill="#fbeea0" />
<polygon points="30.2,288.0 30.8,287.1 32.8,287.1 33.4,288.0 36.5,288.0 36.5,292.0 30.2,292.0" fill="#f0d030" stroke="#a08414" stroke-width="0.4"/><rect x="30.6" y="288.6" width="5.5" height="0.5" fill="#fbeea0" />
<polygon points="30.2,296.1 30.8,295.2 32.8,295.2 33.4,296.1 36.5,296.1 36.5,300.1 30.2,300.1" fill="#f0d030" stroke="#a08414" stroke-width="0.4"/><rect x="30.6" y="296.7" width="5.5" height="0.5" fill="#fbeea0" />
<rect x="32.2" y="296.8" width="2.4" height="2.2" fill="#4a8ad0" rx="0.5"/>
<polygon points="30.2,304.1 30.8,303.2 32.8,303.2 33.4,304.1 36.5,304.1 36.5,308.1 30.2,308.1" fill="#f0d030" stroke="#a08414" stroke-width="0.4"/><rect x="30.6" y="304.8" width="5.5" height="0.5" fill="#fbeea0" />
<rect x="32.2" y="304.9" width="2.4" height="2.2" fill="#4a8ad0" rx="0.5"/>
<polygon points="30.2,312.2 30.8,311.3 32.8,311.3 33.4,312.2 36.5,312.2 36.5,316.2 30.2,316.2" fill="#f0d030" stroke="#a08414" stroke-width="0.4"/><rect x="30.6" y="312.8" width="5.5" height="0.5" fill="#fbeea0" />
<polygon points="30.2,320.3 30.8,319.4 32.8,319.4 33.4,320.3 36.5,320.3 36.5,324.3 30.2,324.3" fill="#f0d030" stroke="#a08414" stroke-width="0.4"/><rect x="30.6" y="320.9" width="5.5" height="0.5" fill="#fbeea0" />
<polygon points="30.2,328.4 30.8,327.5 32.8,327.5 33.4,328.4 36.5,328.4 36.5,332.4 30.2,332.4" fill="#f0d030" stroke="#a08414" stroke-width="0.4"/><rect x="30.6" y="329.0" width="5.5" height="0.5" fill="#fbeea0" />
<rect x="32.2" y="329.2" width="2.4" height="2.2" fill="#c04a2a" rx="0.5"/>
<rect x="14.3" y="336.4" width="3.4" height="3.4" fill="#f6f8fc" stroke="#aab4c8" stroke-width="0.5"/><line x1="15.1" y1="338.1" x2="16.9" y2="338.1" stroke="#4a5aa0" stroke-width="0.5"/>
<polygon points="20.8,336.4 21.4,335.5 23.7,335.5 24.2,336.4 27.6,336.4 27.6,340.7 20.8,340.7" fill="#e2b826" stroke="#8a6c10" stroke-width="0.4"/><rect x="21.2" y="337.0" width="6.0" height="0.5" fill="#fbeea0" />
<rect x="22.7" y="344.4" width="3.4" height="3.4" fill="#f6f8fc" stroke="#aab4c8" stroke-width="0.5"/><line x1="23.5" y1="346.1" x2="25.3" y2="346.1" stroke="#4a5aa0" stroke-width="0.5"/><line x1="24.4" y1="345.2" x2="24.4" y2="347.0" stroke="#4a5aa0" stroke-width="0.5"/>
<rect x="30.0" y="348.1" width="6.0" height="0.7" fill="#222" />
<rect x="34.3" y="343.8" width="0.9" height="4.4" fill="#2a3ac8" />
<polygon points="33.6,346.5 35.9,346.5 34.8,348.1" fill="#2a3ac8" stroke="none" stroke-width="0.6"/>
<path d="M31.6 353.04 H33.8 V355.44 H31.6" fill="none" stroke="#333" stroke-width="0.5"/>
<polygon points="33.8,352.2 36.6,354.2 33.8,356.2" fill="#2a9a2a" stroke="none" stroke-width="0.6"/>
<rect x="29.4" y="351.2" width="2.4" height="1.3" fill="#555" />
<rect x="29.4" y="356.1" width="2.4" height="1.3" fill="#555" />
<rect x="29.9" y="351.5" width="1.4" height="0.7" fill="#fcfbf4" />
<rect x="29.9" y="356.4" width="1.4" height="0.7" fill="#fcfbf4" />
<path d="M31.6 361.13 H33.8 V363.53 H31.6" fill="none" stroke="#333" stroke-width="0.5"/>
<polygon points="33.8,360.3 36.6,362.3 33.8,364.3" fill="#2a4ac8" stroke="none" stroke-width="0.6"/>
<rect x="29.4" y="359.3" width="2.4" height="1.3" fill="#555" />
<rect x="29.4" y="364.2" width="2.4" height="1.3" fill="#555" />
<rect x="29.9" y="359.6" width="1.4" height="0.7" fill="#fcfbf4" />
<rect x="29.9" y="364.5" width="1.4" height="0.7" fill="#fcfbf4" />
<rect x="14.3" y="368.7" width="3.4" height="3.4" fill="#f6f8fc" stroke="#aab4c8" stroke-width="0.5"/><line x1="15.1" y1="370.4" x2="16.9" y2="370.4" stroke="#4a5aa0" stroke-width="0.5"/><line x1="16.0" y1="369.5" x2="16.0" y2="371.3" stroke="#4a5aa0" stroke-width="0.5"/>
<polygon points="20.8,368.7 21.4,367.8 23.7,367.8 24.2,368.7 27.6,368.7 27.6,373.0 20.8,373.0" fill="#e2b826" stroke="#8a6c10" stroke-width="0.4"/><rect x="21.2" y="369.3" width="6.0" height="0.5" fill="#fbeea0" />
<polygon points="20.8,376.8 21.4,375.9 23.7,375.9 24.2,376.8 27.6,376.8 27.6,381.1 20.8,381.1" fill="#e2b826" stroke="#8a6c10" stroke-width="0.4"/><rect x="21.2" y="377.4" width="6.0" height="0.5" fill="#fbeea0" />
<polygon points="20.8,384.9 21.4,384.0 23.7,384.0 24.2,384.9 27.6,384.9 27.6,389.2 20.8,389.2" fill="#e2b826" stroke="#8a6c10" stroke-width="0.4"/><rect x="21.2" y="385.5" width="6.0" height="0.5" fill="#fbeea0" />
<polygon points="20.8,393.0 21.4,392.1 23.7,392.1 24.2,393.0 27.6,393.0 27.6,397.3 20.8,397.3" fill="#e2b826" stroke="#8a6c10" stroke-width="0.4"/><rect x="21.2" y="393.6" width="6.0" height="0.5" fill="#fbeea0" />
<polygon points="20.8,401.1 21.4,400.2 23.7,400.2 24.2,401.1 27.6,401.1 27.6,405.4 20.8,405.4" fill="#e2b826" stroke="#8a6c10" stroke-width="0.4"/><rect x="21.2" y="401.7" width="6.0" height="0.5" fill="#fbeea0" />
<rect x="14.3" y="409.2" width="3.4" height="3.4" fill="#f6f8fc" stroke="#aab4c8" stroke-width="0.5"/><line x1="15.1" y1="410.9" x2="16.9" y2="410.9" stroke="#4a5aa0" stroke-width="0.5"/><line x1="16.0" y1="410.0" x2="16.0" y2="411.8" stroke="#4a5aa0" stroke-width="0.5"/>
<polygon points="20.8,409.2 21.4,408.3 23.7,408.3 24.2,409.2 27.6,409.2 27.6,413.5 20.8,413.5" fill="#e2b826" stroke="#8a6c10" stroke-width="0.4"/><rect x="21.2" y="409.8" width="6.0" height="0.5" fill="#fbeea0" />
<rect x="14.3" y="417.3" width="3.4" height="3.4" fill="#f6f8fc" stroke="#aab4c8" stroke-width="0.5"/><line x1="15.1" y1="419.0" x2="16.9" y2="419.0" stroke="#4a5aa0" stroke-width="0.5"/>
<polygon points="20.8,417.3 21.4,416.4 23.7,416.4 24.2,417.3 27.6,417.3 27.6,421.6 20.8,421.6" fill="#e2b826" stroke="#8a6c10" stroke-width="0.4"/><rect x="21.2" y="417.9" width="6.0" height="0.5" fill="#fbeea0" />
<rect x="30.0" y="423.9" width="6.3" height="6.3" fill="#f4f4fc" stroke="#7272dc" stroke-width="0.8"/>
<rect x="31.6" y="426.2" width="3.0" height="2.6" fill="#5a5a72" />
<line x1="31.2" y1="428.7" x2="35.2" y2="425.2" stroke="#5a5a72" stroke-width="0.6"/>
<rect x="30.0" y="432.0" width="6.3" height="6.3" fill="#f4f4fc" stroke="#7272dc" stroke-width="0.8"/>
<rect x="31.6" y="434.3" width="3.0" height="2.6" fill="#5a5a72" />
<line x1="31.2" y1="436.7" x2="35.2" y2="433.3" stroke="#5a5a72" stroke-width="0.6"/>
<rect x="30.0" y="440.1" width="6.3" height="6.3" fill="#f4f4fc" stroke="#7272dc" stroke-width="0.8"/>
<rect x="31.6" y="442.4" width="3.0" height="2.6" fill="#5a5a72" />
<line x1="31.2" y1="444.8" x2="35.2" y2="441.4" stroke="#5a5a72" stroke-width="0.6"/>
<rect x="30.0" y="448.2" width="6.3" height="6.3" fill="#f4f4fc" stroke="#7272dc" stroke-width="0.8"/>
<rect x="31.6" y="450.5" width="3.0" height="2.6" fill="#5a5a72" />
<line x1="31.2" y1="452.9" x2="35.2" y2="449.5" stroke="#5a5a72" stroke-width="0.6"/>
<rect x="30.0" y="456.3" width="6.3" height="6.3" fill="#f4f4fc" stroke="#7272dc" stroke-width="0.8"/>
<rect x="31.6" y="458.6" width="3.0" height="2.6" fill="#5a5a72" />
<line x1="31.2" y1="461.0" x2="35.2" y2="457.6" stroke="#5a5a72" stroke-width="0.6"/>
<rect x="30.0" y="464.4" width="6.3" height="6.3" fill="#f4f4fc" stroke="#7272dc" stroke-width="0.8"/>
<rect x="31.6" y="466.7" width="3.0" height="2.6" fill="#5a5a72" />
<line x1="31.2" y1="469.1" x2="35.2" y2="465.7" stroke="#5a5a72" stroke-width="0.6"/>
<rect x="30.0" y="472.5" width="6.3" height="6.3" fill="#f4f4fc" stroke="#7272dc" stroke-width="0.8"/>
<rect x="31.6" y="474.8" width="3.0" height="2.6" fill="#5a5a72" />
<line x1="31.2" y1="477.2" x2="35.2" y2="473.8" stroke="#5a5a72" stroke-width="0.6"/>
<rect x="30.0" y="480.6" width="6.3" height="6.3" fill="#f4f4fc" stroke="#7272dc" stroke-width="0.8"/>
<rect x="31.6" y="482.9" width="3.0" height="2.6" fill="#5a5a72" />
<line x1="31.2" y1="485.3" x2="35.2" y2="481.9" stroke="#5a5a72" stroke-width="0.6"/>
<rect x="30.0" y="488.7" width="6.3" height="6.3" fill="#f4f4fc" stroke="#7272dc" stroke-width="0.8"/>
<rect x="31.6" y="491.0" width="3.0" height="2.6" fill="#5a5a72" />
<line x1="31.2" y1="493.4" x2="35.2" y2="490.0" stroke="#5a5a72" stroke-width="0.6"/>
<rect x="30.0" y="496.8" width="6.3" height="6.3" fill="#f4f4fc" stroke="#7272dc" stroke-width="0.8"/>
<rect x="31.6" y="499.1" width="3.0" height="2.6" fill="#5a5a72" />
<line x1="31.2" y1="501.5" x2="35.2" y2="498.1" stroke="#5a5a72" stroke-width="0.6"/>
<rect x="30.0" y="504.8" width="6.3" height="6.3" fill="#f4f4fc" stroke="#7272dc" stroke-width="0.8"/>
<rect x="31.6" y="507.1" width="3.0" height="2.6" fill="#5a5a72" />
<line x1="31.2" y1="509.6" x2="35.2" y2="506.1" stroke="#5a5a72" stroke-width="0.6"/>
<path d="M106.1 65 L107.8 63.3 L109.5 65" fill="none" stroke="#2a2a2a" stroke-width="1"/>
<path d="M106.1 505.8 L107.8 507.5 L109.5 505.8" fill="none" stroke="#2a2a2a" stroke-width="1"/>
<path d="M6.2 513.4 L4.5 515.1 L6.2 516.8 M99.6 513.4 L101.3 515.1 L99.6 516.8" fill="none" stroke="#2a2a2a" stroke-width="1"/>
<rect x="100.3" y="50.6" width="2.4" height="3.0" fill="none" stroke="#666" stroke-width="0.5"/>
<line x1="101.5" y1="53.6" x2="101.5" y2="55.6" stroke="#666" stroke-width="0.5"/>
<line x1="99.8" y1="53.6" x2="103.2" y2="53.6" stroke="#666" stroke-width="0.5"/>
<line x1="107.0" y1="50.8" x2="110.6" y2="54.8" stroke="#555" stroke-width="0.6"/>
<line x1="107.0" y1="54.8" x2="110.6" y2="50.8" stroke="#555" stroke-width="0.6"/>
<rect x="3.4" y="521.6" width="5.0" height="4.4" fill="#f8f8ff" stroke="#3a5ab8" stroke-width="0.6"/>
<circle cx="7.4" cy="526.4" r="1.8" fill="#e8d040" stroke="#8a6a1a" stroke-width="0.5"/>
<rect x="3.4" y="521.6" width="5.0" height="1.2" fill="#3a5ab8" />
<rect x="28.6" y="522.6" width="5.6" height="4.6" fill="#9ab0e0" stroke="#3a5ab8" stroke-width="0.5"/>
<rect x="29.4" y="521.4" width="4.0" height="1.6" fill="#d8c8a0" />
<line x1="31.0" y1="524.0" x2="34.0" y2="521.0" stroke="#555" stroke-width="0.6"/>
<path d="M59.6 527.6 L61.6 522.4 L63.4 527.6 M60.4 525.8 H62.6" fill="none" stroke="#3a4ab8" stroke-width="0.7"/>
<line x1="58.4" y1="527.4" x2="60.6" y2="525.0" stroke="#6a8ad8" stroke-width="0.7"/>
</svg>
<div class="b" style="left:115px;top:48px;width:604px;height:352px;background:#fff;border-left:1px solid #8a8f99;border-top:1px solid #8a8f99"></div>
<svg width="720" height="540" viewBox="0 0 720 540">
<polygon points="146.3,154.4 153.6,154.4 153.6,158.1 191.7,159.2 191.7,239.7 206.4,247.3 600.6,247.3 615.4,239.5 615.4,159.5 676.2,157.7 676.2,154.1 687.1,154.1 653.2,276.8 153.9,276.8 153.9,181.5" fill="#2a2af5" stroke="#05055a" stroke-width="0.6" stroke-linejoin="miter"/>
<polygon points="153.9,226.4 181,226.4 181,239.7 153.9,239.7" fill="#2020d8"/>
<polygon points="625.6,226.4 667.2,226.4 663.5,239.7 625.6,239.7" fill="#2020d8"/>
<polyline points="153.6,158.1 157,165.8 187.3,165.8 191.7,163.9" fill="none" stroke="#05055a" stroke-width="0.6"/>
<line x1="163.7" y1="158.5" x2="161.4" y2="165.8" stroke="#05055a" stroke-width="0.6"/>
<line x1="172.8" y1="158.8" x2="175.3" y2="165.8" stroke="#05055a" stroke-width="0.6"/>
<line x1="181.9" y1="159" x2="179.7" y2="165.8" stroke="#05055a" stroke-width="0.6"/>
<line x1="181.2" y1="165.8" x2="181.2" y2="239.7" stroke="#05055a" stroke-width="0.9"/>
<line x1="189.2" y1="175.2" x2="191.7" y2="175.2" stroke="#05055a" stroke-width="0.5"/>
<line x1="189.2" y1="181.3" x2="191.7" y2="181.3" stroke="#05055a" stroke-width="0.5"/>
<line x1="189.2" y1="193.2" x2="191.7" y2="193.2" stroke="#05055a" stroke-width="0.5"/>
<line x1="189.2" y1="199.4" x2="191.7" y2="199.4" stroke="#05055a" stroke-width="0.5"/>
<line x1="189.2" y1="211" x2="191.7" y2="211" stroke="#05055a" stroke-width="0.5"/>
<line x1="189.2" y1="217.2" x2="191.7" y2="217.2" stroke="#05055a" stroke-width="0.5"/>
<line x1="189.2" y1="229.5" x2="191.7" y2="229.5" stroke="#05055a" stroke-width="0.5"/>
<line x1="153.9" y1="208.6" x2="181.2" y2="208.6" stroke="#05055a" stroke-width="0.7"/>
<line x1="153.9" y1="218.9" x2="181.2" y2="218.9" stroke="#05055a" stroke-width="0.7"/>
<line x1="153.9" y1="226.4" x2="181.2" y2="226.4" stroke="#05055a" stroke-width="0.7"/>
<line x1="153.9" y1="239.7" x2="181.2" y2="239.7" stroke="#05055a" stroke-width="0.7"/>
<line x1="181.2" y1="235.6" x2="191.7" y2="235.6" stroke="#05055a" stroke-width="0.5"/>
<line x1="181.2" y1="239.7" x2="191.7" y2="239.7" stroke="#05055a" stroke-width="0.5"/>
<line x1="191.4" y1="239.7" x2="191.4" y2="276.8" stroke="#05055a" stroke-width="0.7"/>
<polyline points="181.2,239.7 186,245 191.7,249.7 206.4,257.4" fill="none" stroke="#05055a" stroke-width="0.6"/>
<line x1="186" y1="244.7" x2="153.9" y2="276.8" stroke="#05055a" stroke-width="0.6"/>
<line x1="186" y1="244.7" x2="186" y2="258.5" stroke="#05055a" stroke-width="0.5"/>
<line x1="196.7" y1="254" x2="196.7" y2="260" stroke="#05055a" stroke-width="0.5"/>
<polyline points="615.4,163.3 618.9,166.4 669.9,165.2 671.8,157.7" fill="none" stroke="#05055a" stroke-width="0.6"/>
<line x1="625.8" y1="159.2" x2="627.7" y2="166.2" stroke="#05055a" stroke-width="0.6"/>
<line x1="634" y1="158.9" x2="632" y2="166.1" stroke="#05055a" stroke-width="0.6"/>
<line x1="643.4" y1="158.6" x2="646" y2="165.8" stroke="#05055a" stroke-width="0.6"/>
<line x1="652.6" y1="158.3" x2="650.3" y2="165.7" stroke="#05055a" stroke-width="0.6"/>
<line x1="662.3" y1="158.1" x2="664.2" y2="165.4" stroke="#05055a" stroke-width="0.6"/>
<line x1="625.6" y1="166.3" x2="625.6" y2="239.7" stroke="#05055a" stroke-width="0.9"/>
<line x1="615.4" y1="175.2" x2="618" y2="175.2" stroke="#05055a" stroke-width="0.5"/>
<line x1="615.4" y1="181.3" x2="618" y2="181.3" stroke="#05055a" stroke-width="0.5"/>
<line x1="615.4" y1="193.2" x2="618" y2="193.2" stroke="#05055a" stroke-width="0.5"/>
<line x1="615.4" y1="199.4" x2="618" y2="199.4" stroke="#05055a" stroke-width="0.5"/>
<line x1="615.4" y1="211" x2="618" y2="211" stroke="#05055a" stroke-width="0.5"/>
<line x1="615.4" y1="217.2" x2="618" y2="217.2" stroke="#05055a" stroke-width="0.5"/>
<line x1="615.4" y1="229.5" x2="618" y2="229.5" stroke="#05055a" stroke-width="0.5"/>
<line x1="625.6" y1="200.5" x2="674.2804400977996" y2="200.5" stroke="#05055a" stroke-width="0.7"/>
<line x1="625.6" y1="218.9" x2="669.1968215158925" y2="218.9" stroke="#05055a" stroke-width="0.7"/>
<line x1="625.6" y1="226.4" x2="667.1246943765282" y2="226.4" stroke="#05055a" stroke-width="0.7"/>
<line x1="625.6" y1="239.7" x2="663.4501222493888" y2="239.7" stroke="#05055a" stroke-width="0.7"/>
<line x1="615.4" y1="235.6" x2="625.6" y2="235.6" stroke="#05055a" stroke-width="0.5"/>
<line x1="615.4" y1="239.7" x2="625.6" y2="239.7" stroke="#05055a" stroke-width="0.5"/>
<line x1="615.7" y1="239.7" x2="615.7" y2="276.8" stroke="#05055a" stroke-width="0.7"/>
<polyline points="625.6,239.7 620.9,245 615.4,249.7 600.6,257.4" fill="none" stroke="#05055a" stroke-width="0.6"/>
<line x1="620.9" y1="244.7" x2="653.2" y2="276.8" stroke="#05055a" stroke-width="0.6"/>
<line x1="620.9" y1="244.7" x2="620.9" y2="258.5" stroke="#05055a" stroke-width="0.5"/>
<line x1="609.8" y1="253.5" x2="609.8" y2="259.5" stroke="#05055a" stroke-width="0.5"/>
<line x1="206.4" y1="257.4" x2="600.6" y2="257.4" stroke="#05055a" stroke-width="0.9"/>
<line x1="206.4" y1="262.4" x2="600.6" y2="262.4" stroke="#05055a" stroke-width="0.7"/>
<line x1="206.8" y1="247.3" x2="206.8" y2="276.8" stroke="#05055a" stroke-width="0.7"/>
<line x1="600.3" y1="247.3" x2="600.3" y2="276.8" stroke="#05055a" stroke-width="0.7"/>
<line x1="210.7" y1="247.3" x2="210.7" y2="250.6" stroke="#05055a" stroke-width="0.6"/>
<line x1="217.6" y1="247.3" x2="217.6" y2="250.6" stroke="#05055a" stroke-width="0.6"/>
<line x1="233.0" y1="247.3" x2="233.0" y2="250.6" stroke="#05055a" stroke-width="0.6"/>
<line x1="239.9" y1="247.3" x2="239.9" y2="250.6" stroke="#05055a" stroke-width="0.6"/>
<line x1="255.2" y1="247.3" x2="255.2" y2="250.6" stroke="#05055a" stroke-width="0.6"/>
<line x1="262.1" y1="247.3" x2="262.1" y2="250.6" stroke="#05055a" stroke-width="0.6"/>
<line x1="277.5" y1="247.3" x2="277.5" y2="250.6" stroke="#05055a" stroke-width="0.6"/>
<line x1="284.4" y1="247.3" x2="284.4" y2="250.6" stroke="#05055a" stroke-width="0.6"/>
<line x1="299.8" y1="247.3" x2="299.8" y2="250.6" stroke="#05055a" stroke-width="0.6"/>
<line x1="306.7" y1="247.3" x2="306.7" y2="250.6" stroke="#05055a" stroke-width="0.6"/>
<line x1="322.0" y1="247.3" x2="322.0" y2="250.6" stroke="#05055a" stroke-width="0.6"/>
<line x1="328.9" y1="247.3" x2="328.9" y2="250.6" stroke="#05055a" stroke-width="0.6"/>
<line x1="344.3" y1="247.3" x2="344.3" y2="250.6" stroke="#05055a" stroke-width="0.6"/>
<line x1="351.2" y1="247.3" x2="351.2" y2="250.6" stroke="#05055a" stroke-width="0.6"/>
<line x1="366.6" y1="247.3" x2="366.6" y2="250.6" stroke="#05055a" stroke-width="0.6"/>
<line x1="373.5" y1="247.3" x2="373.5" y2="250.6" stroke="#05055a" stroke-width="0.6"/>
<line x1="388.9" y1="247.3" x2="388.9" y2="250.6" stroke="#05055a" stroke-width="0.6"/>
<line x1="395.8" y1="247.3" x2="395.8" y2="250.6" stroke="#05055a" stroke-width="0.6"/>
<line x1="411.1" y1="247.3" x2="411.1" y2="250.6" stroke="#05055a" stroke-width="0.6"/>
<line x1="418.0" y1="247.3" x2="418.0" y2="250.6" stroke="#05055a" stroke-width="0.6"/>
<line x1="433.4" y1="247.3" x2="433.4" y2="250.6" stroke="#05055a" stroke-width="0.6"/>
<line x1="440.3" y1="247.3" x2="440.3" y2="250.6" stroke="#05055a" stroke-width="0.6"/>
<line x1="455.7" y1="247.3" x2="455.7" y2="250.6" stroke="#05055a" stroke-width="0.6"/>
<line x1="462.6" y1="247.3" x2="462.6" y2="250.6" stroke="#05055a" stroke-width="0.6"/>
<line x1="477.9" y1="247.3" x2="477.9" y2="250.6" stroke="#05055a" stroke-width="0.6"/>
<line x1="484.8" y1="247.3" x2="484.8" y2="250.6" stroke="#05055a" stroke-width="0.6"/>
<line x1="500.2" y1="247.3" x2="500.2" y2="250.6" stroke="#05055a" stroke-width="0.6"/>
<line x1="507.1" y1="247.3" x2="507.1" y2="250.6" stroke="#05055a" stroke-width="0.6"/>
<line x1="522.5" y1="247.3" x2="522.5" y2="250.6" stroke="#05055a" stroke-width="0.6"/>
<line x1="529.4" y1="247.3" x2="529.4" y2="250.6" stroke="#05055a" stroke-width="0.6"/>
<line x1="544.7" y1="247.3" x2="544.7" y2="250.6" stroke="#05055a" stroke-width="0.6"/>
<line x1="551.6" y1="247.3" x2="551.6" y2="250.6" stroke="#05055a" stroke-width="0.6"/>
<line x1="567.0" y1="247.3" x2="567.0" y2="250.6" stroke="#05055a" stroke-width="0.6"/>
<line x1="573.9" y1="247.3" x2="573.9" y2="250.6" stroke="#05055a" stroke-width="0.6"/>
<line x1="589.3" y1="247.3" x2="589.3" y2="250.6" stroke="#05055a" stroke-width="0.6"/>
<line x1="596.2" y1="247.3" x2="596.2" y2="250.6" stroke="#05055a" stroke-width="0.6"/>
<line x1="210.7" y1="262.4" x2="210.7" y2="276.8" stroke="#05055a" stroke-width="0.6"/>
<line x1="214.5" y1="262.4" x2="214.5" y2="276.8" stroke="#05055a" stroke-width="0.6"/>
<line x1="383" y1="262.4" x2="383" y2="276.8" stroke="#05055a" stroke-width="0.6"/>
<line x1="424.2" y1="262.4" x2="424.2" y2="276.8" stroke="#05055a" stroke-width="0.6"/>
<line x1="592.4" y1="262.4" x2="592.4" y2="276.8" stroke="#05055a" stroke-width="0.6"/>
<line x1="596.2" y1="262.4" x2="596.2" y2="276.8" stroke="#05055a" stroke-width="0.6"/>
<line x1="227.7" y1="257.4" x2="227.7" y2="276.8" stroke="#05055a" stroke-width="0.6"/>
<line x1="231.2" y1="257.4" x2="231.2" y2="276.8" stroke="#05055a" stroke-width="0.6"/>
<line x1="259.8" y1="257.4" x2="259.8" y2="276.8" stroke="#05055a" stroke-width="0.6"/>
<line x1="350.5" y1="257.4" x2="350.5" y2="276.8" stroke="#05055a" stroke-width="0.6"/>
<line x1="387" y1="257.4" x2="387" y2="276.8" stroke="#05055a" stroke-width="0.6"/>
<line x1="398.4" y1="257.4" x2="398.4" y2="276.8" stroke="#05055a" stroke-width="0.6"/>
<line x1="408.5" y1="257.4" x2="408.5" y2="276.8" stroke="#05055a" stroke-width="0.6"/>
<line x1="419.4" y1="257.4" x2="419.4" y2="276.8" stroke="#05055a" stroke-width="0.6"/>
<line x1="456.4" y1="257.4" x2="456.4" y2="276.8" stroke="#05055a" stroke-width="0.6"/>
<line x1="547" y1="257.4" x2="547" y2="276.8" stroke="#05055a" stroke-width="0.6"/>
<line x1="575.8" y1="257.4" x2="575.8" y2="276.8" stroke="#05055a" stroke-width="0.6"/>
<line x1="579.2" y1="257.4" x2="579.2" y2="276.8" stroke="#05055a" stroke-width="0.6"/>
<line x1="403.5" y1="247.3" x2="403.5" y2="276.8" stroke="#05055a" stroke-width="0.7"/>
<line x1="387" y1="269" x2="419.4" y2="269" stroke="#05055a" stroke-width="0.6"/>
<line x1="177.8" y1="231.8" x2="190" y2="238" stroke="#a8aef0" stroke-width="0.5" stroke-dasharray="2.2 1.4"/>
<line x1="616.5" y1="237.8" x2="628.8" y2="231.8" stroke="#a8aef0" stroke-width="0.5" stroke-dasharray="2.2 1.4"/>
<polygon points="191.4,281 182.8,290.9 200.0,290.9" fill="#1fe01f"/>
<circle cx="191.4" cy="281.3" r="4.3" fill="#1fe01f"/>
<circle cx="190.8" cy="280.6" r="1.8" fill="#3ae83a"/>
<polygon points="403.5,281 394.9,290.9 412.1,290.9" fill="#1fe01f"/>
<circle cx="403.5" cy="281.3" r="4.3" fill="#1fe01f"/>
<circle cx="402.9" cy="280.6" r="1.8" fill="#3ae83a"/>
<polygon points="615.5,281 606.9,290.9 624.1,290.9" fill="#1fe01f"/>
<circle cx="615.5" cy="281.3" r="4.3" fill="#1fe01f"/>
<circle cx="614.9" cy="280.6" r="1.8" fill="#3ae83a"/>
<line x1="394.7" y1="294.5" x2="412.3" y2="294.5" stroke="#1fe01f" stroke-width="0.6"/>
<line x1="606.7" y1="294.5" x2="624.3" y2="294.5" stroke="#1fe01f" stroke-width="0.6"/>
<line x1="182.6" y1="294.5" x2="183.6" y2="294.5" stroke="#8cf08c" stroke-width="0.6"/>
<line x1="199.6" y1="294.5" x2="200.6" y2="294.5" stroke="#8cf08c" stroke-width="0.6"/>
</svg>
<div class="b" style="left:115.5px;top:403px;width:603.5px;height:7.8px;background:#bec7d6;"></div>
<div class="t " style="left:117px;top:403.2px;transform:scaleX(0.823);color:#222;">1.15 Member Eccentricities</div>
<div class="b" style="left:115.5px;top:410.8px;width:603.5px;height:12.6px;background:linear-gradient(#e8ecf4,#d6dde9);"></div>
<svg width="720" height="540" viewBox="0 0 720 540"><rect x="115.50" y="423.60" width="596.20" height="80.70" fill="#fff"/><rect x="115.50" y="423.60" width="596.20" height="25.30" fill="#ebebeb"/><rect x="140.50" y="431.20" width="571.20" height="17.70" fill="#f2f2f2"/><rect x="115.50" y="423.30" width="596.20" height="0.60" fill="#9a9a9a"/><rect x="140.80" y="424.10" width="38.30" height="6.90" fill="#0a78d7"/><rect x="480.00" y="448.90" width="103.40" height="51.70" fill="#efefef"/><rect x="115.50" y="448.90" width="25.00" height="51.70" fill="#e6e6e6"/><rect x="116.00" y="449.50" width="24.30" height="8.00" fill="#0a78d7"/><rect x="140.50" y="430.80" width="571.20" height="0.70" fill="#9a9a9a"/><rect x="140.10" y="423.60" width="0.80" height="7.60" fill="#8e8e8e"/><rect x="179.00" y="423.60" width="0.80" height="7.60" fill="#8e8e8e"/><rect x="211.10" y="423.60" width="0.80" height="7.60" fill="#8e8e8e"/><rect x="243.60" y="423.60" width="0.80" height="7.60" fill="#8e8e8e"/><rect x="275.90" y="423.60" width="0.80" height="7.60" fill="#8e8e8e"/><rect x="308.40" y="423.60" width="0.80" height="7.60" fill="#8e8e8e"/><rect x="340.90" y="423.60" width="0.80" height="7.60" fill="#8e8e8e"/><rect x="372.90" y="423.60" width="0.80" height="7.60" fill="#8e8e8e"/><rect x="408.40" y="423.60" width="0.80" height="7.60" fill="#8e8e8e"/><rect x="443.90" y="423.60" width="0.80" height="7.60" fill="#8e8e8e"/><rect x="479.60" y="423.60" width="0.80" height="7.60" fill="#8e8e8e"/><rect x="512.10" y="423.60" width="0.80" height="7.60" fill="#8e8e8e"/><rect x="547.60" y="423.60" width="0.80" height="7.60" fill="#8e8e8e"/><rect x="583.00" y="423.60" width="0.80" height="7.60" fill="#8e8e8e"/><rect x="615.80" y="423.60" width="0.80" height="7.60" fill="#8e8e8e"/><rect x="648.10" y="423.60" width="0.80" height="7.60" fill="#8e8e8e"/><rect x="697.10" y="423.60" width="0.80" height="7.60" fill="#8e8e8e"/><rect x="140.20" y="431.20" width="0.60" height="17.70" fill="#b4b4b4"/><rect x="179.10" y="431.20" width="0.60" height="17.70" fill="#b4b4b4"/><rect x="211.20" y="440.00" width="0.60" height="8.90" fill="#c8c8c8"/><rect x="243.70" y="440.00" width="0.60" height="8.90" fill="#c8c8c8"/><rect x="276.00" y="431.20" width="0.60" height="17.70" fill="#b4b4b4"/><rect x="308.50" y="440.00" width="0.60" height="8.90" fill="#c8c8c8"/><rect x="341.00" y="440.00" width="0.60" height="8.90" fill="#c8c8c8"/><rect x="373.00" y="431.20" width="0.60" height="17.70" fill="#b4b4b4"/><rect x="408.50" y="440.00" width="0.60" height="8.90" fill="#c8c8c8"/><rect x="444.00" y="431.20" width="0.60" height="17.70" fill="#b4b4b4"/><rect x="479.70" y="440.00" width="0.60" height="8.90" fill="#c8c8c8"/><rect x="512.20" y="440.00" width="0.60" height="8.90" fill="#c8c8c8"/><rect x="547.70" y="440.00" width="0.60" height="8.90" fill="#c8c8c8"/><rect x="583.10" y="431.20" width="0.60" height="17.70" fill="#b4b4b4"/><rect x="615.90" y="440.00" width="0.60" height="8.90" fill="#c8c8c8"/><rect x="648.20" y="431.20" width="0.60" height="17.70" fill="#b4b4b4"/><rect x="697.20" y="440.00" width="0.60" height="8.90" fill="#c8c8c8"/><rect x="115.50" y="448.50" width="596.20" height="0.80" fill="#8e8e8e"/><rect x="140.25" y="448.90" width="0.50" height="51.70" fill="#c4c4c4"/><rect x="179.15" y="448.90" width="0.50" height="51.70" fill="#c4c4c4"/><rect x="211.25" y="448.90" width="0.50" height="51.70" fill="#c4c4c4"/><rect x="243.75" y="448.90" width="0.50" height="51.70" fill="#c4c4c4"/><rect x="276.05" y="448.90" width="0.50" height="51.70" fill="#c4c4c4"/><rect x="308.55" y="448.90" width="0.50" height="51.70" fill="#c4c4c4"/><rect x="341.05" y="448.90" width="0.50" height="51.70" fill="#c4c4c4"/><rect x="373.05" y="448.90" width="0.50" height="51.70" fill="#c4c4c4"/><rect x="408.55" y="448.90" width="0.50" height="51.70" fill="#c4c4c4"/><rect x="444.05" y="448.90" width="0.50" height="51.70" fill="#c4c4c4"/><rect x="479.75" y="448.90" width="0.50" height="51.70" fill="#c4c4c4"/><rect x="512.25" y="448.90" width="0.50" height="51.70" fill="#c4c4c4"/><rect x="547.75" y="448.90" width="0.50" height="51.70" fill="#c4c4c4"/><rect x="583.15" y="448.90" width="0.50" height="51.70" fill="#c4c4c4"/><rect x="615.95" y="448.90" width="0.50" height="51.70" fill="#c4c4c4"/><rect x="648.25" y="448.90" width="0.50" height="51.70" fill="#c4c4c4"/><rect x="697.25" y="448.90" width="0.50" height="51.70" fill="#c4c4c4"/><rect x="140.50" y="457.30" width="571.20" height="0.50" fill="#c4c4c4"/><rect x="115.50" y="457.15" width="25.00" height="0.80" fill="#7e7e7e"/><rect x="140.50" y="465.85" width="571.20" height="0.50" fill="#c4c4c4"/><rect x="115.50" y="465.70" width="25.00" height="0.80" fill="#7e7e7e"/><rect x="140.50" y="474.40" width="571.20" height="0.50" fill="#c4c4c4"/><rect x="115.50" y="474.25" width="25.00" height="0.80" fill="#7e7e7e"/><rect x="140.50" y="482.95" width="571.20" height="0.50" fill="#c4c4c4"/><rect x="115.50" y="482.80" width="25.00" height="0.80" fill="#7e7e7e"/><rect x="140.50" y="491.50" width="571.20" height="0.50" fill="#c4c4c4"/><rect x="115.50" y="491.35" width="25.00" height="0.80" fill="#7e7e7e"/><rect x="140.50" y="500.05" width="571.20" height="0.50" fill="#c4c4c4"/><rect x="115.50" y="499.90" width="25.00" height="0.80" fill="#7e7e7e"/><rect x="140.20" y="448.90" width="0.70" height="51.70" fill="#7e7e7e"/><rect x="115.30" y="423.60" width="0.60" height="77.00" fill="#8e8e8e"/><rect x="141.10" y="449.35" width="37.80" height="7.80" fill="none" stroke="#555" stroke-width="0.7"/><rect x="597.50" y="451.20" width="5.60" height="5.60" fill="#a8a8a8" rx="0.8"/><rect x="597.10" y="450.70" width="5.50" height="5.50" fill="#fff" stroke="#222" stroke-width="0.85" rx="0.8"/><rect x="629.70" y="451.20" width="5.60" height="5.60" fill="#a8a8a8" rx="0.8"/><rect x="629.30" y="450.70" width="5.50" height="5.50" fill="#fff" stroke="#222" stroke-width="0.85" rx="0.8"/><rect x="670.30" y="451.20" width="5.60" height="5.60" fill="#a8a8a8" rx="0.8"/><rect x="669.90" y="450.70" width="5.50" height="5.50" fill="#fff" stroke="#222" stroke-width="0.85" rx="0.8"/><rect x="597.50" y="459.75" width="5.60" height="5.60" fill="#a8a8a8" rx="0.8"/><rect x="597.10" y="459.25" width="5.50" height="5.50" fill="#fff" stroke="#222" stroke-width="0.85" rx="0.8"/><rect x="629.70" y="459.75" width="5.60" height="5.60" fill="#a8a8a8" rx="0.8"/><rect x="629.30" y="459.25" width="5.50" height="5.50" fill="#fff" stroke="#222" stroke-width="0.85" rx="0.8"/><rect x="670.30" y="459.75" width="5.60" height="5.60" fill="#a8a8a8" rx="0.8"/><rect x="669.90" y="459.25" width="5.50" height="5.50" fill="#fff" stroke="#222" stroke-width="0.85" rx="0.8"/><rect x="597.50" y="468.30" width="5.60" height="5.60" fill="#a8a8a8" rx="0.8"/><rect x="597.10" y="467.80" width="5.50" height="5.50" fill="#fff" stroke="#222" stroke-width="0.85" rx="0.8"/><rect x="629.70" y="468.30" width="5.60" height="5.60" fill="#a8a8a8" rx="0.8"/><rect x="629.30" y="467.80" width="5.50" height="5.50" fill="#fff" stroke="#222" stroke-width="0.85" rx="0.8"/><rect x="670.30" y="468.30" width="5.60" height="5.60" fill="#a8a8a8" rx="0.8"/><rect x="669.90" y="467.80" width="5.50" height="5.50" fill="#fff" stroke="#222" stroke-width="0.85" rx="0.8"/><rect x="597.50" y="476.85" width="5.60" height="5.60" fill="#a8a8a8" rx="0.8"/><rect x="597.10" y="476.35" width="5.50" height="5.50" fill="#fff" stroke="#222" stroke-width="0.85" rx="0.8"/><rect x="629.70" y="476.85" width="5.60" height="5.60" fill="#a8a8a8" rx="0.8"/><rect x="629.30" y="476.35" width="5.50" height="5.50" fill="#fff" stroke="#222" stroke-width="0.85" rx="0.8"/><rect x="670.30" y="476.85" width="5.60" height="5.60" fill="#a8a8a8" rx="0.8"/><rect x="669.90" y="476.35" width="5.50" height="5.50" fill="#fff" stroke="#222" stroke-width="0.85" rx="0.8"/><rect x="597.50" y="485.40" width="5.60" height="5.60" fill="#a8a8a8" rx="0.8"/><rect x="597.10" y="484.90" width="5.50" height="5.50" fill="#fff" stroke="#222" stroke-width="0.85" rx="0.8"/><rect x="629.70" y="485.40" width="5.60" height="5.60" fill="#a8a8a8" rx="0.8"/><rect x="629.30" y="484.90" width="5.50" height="5.50" fill="#fff" stroke="#222" stroke-width="0.85" rx="0.8"/><rect x="670.30" y="485.40" width="5.60" height="5.60" fill="#a8a8a8" rx="0.8"/><rect x="669.90" y="484.90" width="5.50" height="5.50" fill="#fff" stroke="#222" stroke-width="0.85" rx="0.8"/><rect x="597.50" y="493.95" width="5.60" height="5.60" fill="#a8a8a8" rx="0.8"/><rect x="597.10" y="493.45" width="5.50" height="5.50" fill="#fff" stroke="#222" stroke-width="0.85" rx="0.8"/><rect x="629.70" y="493.95" width="5.60" height="5.60" fill="#a8a8a8" rx="0.8"/><rect x="629.30" y="493.45" width="5.50" height="5.50" fill="#fff" stroke="#222" stroke-width="0.85" rx="0.8"/><rect x="670.30" y="493.95" width="5.60" height="5.60" fill="#a8a8a8" rx="0.8"/><rect x="669.90" y="493.45" width="5.50" height="5.50" fill="#fff" stroke="#222" stroke-width="0.85" rx="0.8"/><rect x="711.70" y="423.20" width="8.30" height="81.40" fill="#f0f0f0"/><rect x="712.00" y="433.00" width="6.70" height="44.00" fill="#cdcdcd"/><rect x="115.50" y="504.30" width="603.50" height="7.40" fill="#f0f0f0"/><rect x="124.50" y="504.60" width="520.30" height="6.80" fill="#cdcdcd"/><rect x="115.50" y="511.70" width="603.50" height="18.30" fill="#f0f0f0"/><rect x="115.50" y="511.70" width="603.50" height="1.60" fill="#f7f7f7"/><rect x="115.50" y="513.20" width="603.50" height="0.60" fill="#8a8a8a"/><rect x="690.50" y="514.30" width="6.40" height="6.60" fill="#f4f4f4" stroke="#a0a0a0" stroke-width="0.5"/><rect x="697.50" y="514.30" width="6.40" height="6.60" fill="#f4f4f4" stroke="#a0a0a0" stroke-width="0.5"/><rect x="704.50" y="514.30" width="6.40" height="6.60" fill="#f4f4f4" stroke="#a0a0a0" stroke-width="0.5"/><rect x="711.50" y="514.30" width="6.40" height="6.60" fill="#f4f4f4" stroke="#a0a0a0" stroke-width="0.5"/><path d="M115.8 513.7 V520.3 Q115.8 521.5 117.0 521.5 H131.60000000000002 Q132.8 521.5 132.8 520.3 V513.7" fill="#f0f0f0" stroke="#5a5a5a" stroke-width="0.7"/><path d="M134 513.7 V520.3 Q134 521.5 135.2 521.5 H147.8 Q149 521.5 149 520.3 V513.7" fill="#f0f0f0" stroke="#5a5a5a" stroke-width="0.7"/><path d="M150 513.7 V520.3 Q150 521.5 151.2 521.5 H170.8 Q172 521.5 172 520.3 V513.7" fill="#f0f0f0" stroke="#5a5a5a" stroke-width="0.7"/><path d="M173.3 513.7 V520.3 Q173.3 521.5 174.5 521.5 H194.10000000000002 Q195.3 521.5 195.3 520.3 V513.7" fill="#f0f0f0" stroke="#5a5a5a" stroke-width="0.7"/><path d="M196.5 513.7 V520.3 Q196.5 521.5 197.7 521.5 H210.8 Q212 521.5 212 520.3 V513.7" fill="#f0f0f0" stroke="#5a5a5a" stroke-width="0.7"/><path d="M213.3 513.7 V520.3 Q213.3 521.5 214.5 521.5 H235.8 Q237 521.5 237 520.3 V513.7" fill="#f0f0f0" stroke="#5a5a5a" stroke-width="0.7"/><path d="M238.8 513.7 V520.3 Q238.8 521.5 240.0 521.5 H272.1 Q273.3 521.5 273.3 520.3 V513.7" fill="#f0f0f0" stroke="#5a5a5a" stroke-width="0.7"/><path d="M275 513.7 V520.3 Q275 521.5 276.2 521.5 H307.8 Q309 521.5 309 520.3 V513.7" fill="#f0f0f0" stroke="#5a5a5a" stroke-width="0.7"/><path d="M310.4 513.7 V520.3 Q310.4 521.5 311.59999999999997 521.5 H348.0 Q349.2 521.5 349.2 520.3 V513.7" fill="#f0f0f0" stroke="#5a5a5a" stroke-width="0.7"/><path d="M351 513.7 V520.3 Q351 521.5 352.2 521.5 H377.40000000000003 Q378.6 521.5 378.6 520.3 V513.7" fill="#f0f0f0" stroke="#5a5a5a" stroke-width="0.7"/><path d="M380.6 513.7 V520.3 Q380.6 521.5 381.8 521.5 H427.6 Q428.8 521.5 428.8 520.3 V513.7" fill="#f0f0f0" stroke="#5a5a5a" stroke-width="0.7"/><path d="M430.6 513.7 V520.3 Q430.6 521.5 431.8 521.5 H463.8 Q465 521.5 465 520.3 V513.7" fill="#f0f0f0" stroke="#5a5a5a" stroke-width="0.7"/><path d="M467 513.7 V520.3 Q467 521.5 468.2 521.5 H501.3 Q502.5 521.5 502.5 520.3 V513.7" fill="#f0f0f0" stroke="#5a5a5a" stroke-width="0.7"/><path d="M504 512.6 V520.6999999999999 Q504 521.9 505.2 521.9 H553.8 Q555 521.9 555 520.6999999999999 V512.6" fill="#fff" stroke="#5a5a5a" stroke-width="0.7"/><path d="M556 513.7 V520.3 Q556 521.5 557.2 521.5 H595.3 Q596.5 521.5 596.5 520.3 V513.7" fill="#f0f0f0" stroke="#5a5a5a" stroke-width="0.7"/><path d="M598 513.7 V520.3 Q598 521.5 599.2 521.5 H618.3 Q619.5 521.5 619.5 520.3 V513.7" fill="#f0f0f0" stroke="#5a5a5a" stroke-width="0.7"/><path d="M621 513.7 V520.3 Q621 521.5 622.2 521.5 H682.8 Q684 521.5 684 520.3 V513.7" fill="#f0f0f0" stroke="#5a5a5a" stroke-width="0.7"/><path d="M713.6 429 L715.4 427.2 L717.2 429 M713.6 496.2 L715.4 498 L717.2 496.2" fill="none" stroke="#2a2a2a" stroke-width="1"/><path d="M121 506.3 L119.3 508 L121 509.7 M713.8 506.3 L715.5 508 L713.8 509.7" fill="none" stroke="#2a2a2a" stroke-width="1"/><g fill="#9a9a9a"><path d="M695.3 516 L695.3 519.2 L693.3 517.6Z"/><rect x="692.2" y="516" width="0.7" height="3.2"/><path d="M702 516 L702 519.2 L700 517.6Z"/></g><g fill="#111"><path d="M707 516 L707 519.2 L709 517.6Z"/><path d="M713.6 516 L713.6 519.2 L715.6 517.6Z"/><rect x="715.8" y="516" width="0.7" height="3.2"/></g><g stroke="#555" stroke-width="0.5" fill="none"><rect x="706.4" y="404.8" width="2.2" height="2.6"/><path d="M705.8 407.4 H709.2 M707.5 407.4 V409"/><path d="M713.4 404.8 L716.6 408.4 M716.6 404.8 L713.4 408.4"/></g></svg>
<div class="b" style="left:0;top:0;width:711.7px;height:540px;overflow:hidden"><div class="t" style="top:423.80px;transform:scaleX(0.984);font-size:6.3px;color:#fff;left:99.95px;width:120px;text-align:center;transform-origin:50% 0;">A</div><div class="t" style="top:423.80px;transform:scaleX(0.984);font-size:6.3px;color:#222;left:135.45px;width:120px;text-align:center;transform-origin:50% 0;">B</div><div class="t" style="top:423.80px;transform:scaleX(0.984);font-size:6.3px;color:#222;left:167.75px;width:120px;text-align:center;transform-origin:50% 0;">C</div><div class="t" style="top:423.80px;transform:scaleX(0.984);font-size:6.3px;color:#222;left:200.15px;width:120px;text-align:center;transform-origin:50% 0;">D</div><div class="t" style="top:423.80px;transform:scaleX(0.984);font-size:6.3px;color:#222;left:232.55px;width:120px;text-align:center;transform-origin:50% 0;">E</div><div class="t" style="top:423.80px;transform:scaleX(0.984);font-size:6.3px;color:#222;left:265.05px;width:120px;text-align:center;transform-origin:50% 0;">F</div><div class="t" style="top:423.80px;transform:scaleX(0.984);font-size:6.3px;color:#222;left:297.30px;width:120px;text-align:center;transform-origin:50% 0;">G</div><div class="t" style="top:423.80px;transform:scaleX(0.984);font-size:6.3px;color:#222;left:331.05px;width:120px;text-align:center;transform-origin:50% 0;">H</div><div class="t" style="top:423.80px;transform:scaleX(0.984);font-size:6.3px;color:#222;left:366.55px;width:120px;text-align:center;transform-origin:50% 0;">I</div><div class="t" style="top:423.80px;transform:scaleX(0.984);font-size:6.3px;color:#222;left:402.15px;width:120px;text-align:center;transform-origin:50% 0;">J</div><div class="t" style="top:423.80px;transform:scaleX(0.984);font-size:6.3px;color:#222;left:436.25px;width:120px;text-align:center;transform-origin:50% 0;">K</div><div class="t" style="top:423.80px;transform:scaleX(0.984);font-size:6.3px;color:#222;left:470.25px;width:120px;text-align:center;transform-origin:50% 0;">L</div><div class="t" style="top:423.80px;transform:scaleX(0.984);font-size:6.3px;color:#222;left:505.70px;width:120px;text-align:center;transform-origin:50% 0;">M</div><div class="t" style="top:423.80px;transform:scaleX(0.984);font-size:6.3px;color:#222;left:539.80px;width:120px;text-align:center;transform-origin:50% 0;">N</div><div class="t" style="top:423.80px;transform:scaleX(0.984);font-size:6.3px;color:#222;left:572.35px;width:120px;text-align:center;transform-origin:50% 0;">O</div><div class="t" style="top:423.80px;transform:scaleX(0.984);font-size:6.3px;color:#222;left:613.00px;width:120px;text-align:center;transform-origin:50% 0;">P</div><div class="t" style="top:432.20px;transform:scaleX(0.945);font-size:6.3px;color:#000;left:68.00px;width:120px;text-align:center;transform-origin:50% 0;">Eccen.</div><div class="t" style="top:438.90px;transform:scaleX(0.945);font-size:6.3px;color:#000;left:68.00px;width:120px;text-align:center;transform-origin:50% 0;">No.</div><div class="t" style="top:431.90px;transform:scaleX(0.945);font-size:6.3px;color:#000;left:99.95px;width:120px;text-align:center;transform-origin:50% 0;">Reference</div><div class="t" style="top:439.90px;transform:scaleX(0.945);font-size:6.3px;color:#000;left:99.95px;width:120px;text-align:center;transform-origin:50% 0;">System</div><div class="t" style="top:431.90px;transform:scaleX(0.930);font-size:6.3px;color:#000;left:167.85px;width:120px;text-align:center;transform-origin:50% 0;">Member Start - Eccentricity [in]</div><div class="t" style="top:431.90px;transform:scaleX(0.930);font-size:6.3px;color:#000;left:264.80px;width:120px;text-align:center;transform-origin:50% 0;">Member End - Eccentricity [in]</div><div class="t" style="top:431.90px;transform:scaleX(0.969);font-size:6.3px;color:#000;left:348.80px;width:120px;text-align:center;transform-origin:50% 0;">Cross-Section Alignment</div><div class="t" style="top:431.90px;transform:scaleX(0.943);font-size:6.3px;color:#000;left:446.30px;">Transverse offset from cross-section of another obje</div><div class="t" style="top:431.90px;transform:scaleX(0.935);font-size:6.3px;color:#000;left:584.60px;">Axial offset from adjoinin</div><div class="t" style="top:431.90px;transform:scaleX(0.966);font-size:6.3px;color:#000;left:650.00px;">Member hinge location</div><div class="t" style="top:439.90px;transform:scaleX(0.984);font-size:6.3px;color:#000;left:135.45px;width:120px;text-align:center;transform-origin:50% 0;">e<span class="sb">i,X</span></div><div class="t" style="top:439.90px;transform:scaleX(0.984);font-size:6.3px;color:#000;left:167.75px;width:120px;text-align:center;transform-origin:50% 0;">e<span class="sb">i,Y</span></div><div class="t" style="top:439.90px;transform:scaleX(0.984);font-size:6.3px;color:#000;left:200.15px;width:120px;text-align:center;transform-origin:50% 0;">e<span class="sb">i,Z</span></div><div class="t" style="top:439.90px;transform:scaleX(0.984);font-size:6.3px;color:#000;left:232.55px;width:120px;text-align:center;transform-origin:50% 0;">e<span class="sb">j,X</span></div><div class="t" style="top:439.90px;transform:scaleX(0.984);font-size:6.3px;color:#000;left:265.05px;width:120px;text-align:center;transform-origin:50% 0;">e<span class="sb">j,Y</span></div><div class="t" style="top:439.90px;transform:scaleX(0.984);font-size:6.3px;color:#000;left:297.30px;width:120px;text-align:center;transform-origin:50% 0;">e<span class="sb">j,Z</span></div><div class="t" style="top:439.90px;transform:scaleX(0.945);font-size:6.3px;color:#000;left:331.05px;width:120px;text-align:center;transform-origin:50% 0;">y-Axis</div><div class="t" style="top:439.90px;transform:scaleX(0.945);font-size:6.3px;color:#000;left:366.55px;width:120px;text-align:center;transform-origin:50% 0;">z-Axis</div><div class="t" style="top:439.90px;transform:scaleX(0.945);font-size:6.3px;color:#000;left:470.25px;width:120px;text-align:center;transform-origin:50% 0;">y-Axis</div><div class="t" style="top:439.90px;transform:scaleX(0.945);font-size:6.3px;color:#000;left:505.70px;width:120px;text-align:center;transform-origin:50% 0;">z-Axis</div><div class="t" style="top:439.90px;transform:scaleX(0.915);font-size:6.3px;color:#000;left:402.15px;width:120px;text-align:center;transform-origin:50% 0;">Object Type</div><div class="t" style="top:439.90px;transform:scaleX(0.915);font-size:6.3px;color:#000;left:436.25px;width:120px;text-align:center;transform-origin:50% 0;">Object No.</div><div class="t" style="top:439.90px;transform:scaleX(0.945);font-size:6.3px;color:#000;left:584.90px;">Member St</div><div class="t" style="top:439.90px;transform:scaleX(0.945);font-size:6.3px;color:#000;left:617.70px;">Member En</div><div class="t" style="top:439.90px;transform:scaleX(0.945);font-size:6.3px;color:#000;left:613.00px;width:120px;text-align:center;transform-origin:50% 0;">Member Start</div><div class="t" style="top:439.90px;transform:scaleX(0.945);font-size:6.3px;color:#000;left:703.50px;">Me</div><div class="t" style="top:449.80px;transform:scaleX(0.984);font-size:6.3px;color:#fff;left:68.00px;width:120px;text-align:center;transform-origin:50% 0;">1</div><div class="t" style="top:449.80px;transform:scaleX(0.945);font-size:6.3px;color:#000;left:142.90px;"><u>G</u>lobal</div><div class="t" style="top:449.80px;transform:scaleX(0.886);font-size:6.3px;color:#000;right:502.20px;transform-origin:100% 0;">0.00</div><div class="t" style="top:449.80px;transform:scaleX(0.886);font-size:6.3px;color:#000;right:469.70px;transform-origin:100% 0;">-6.89</div><div class="t" style="top:449.80px;transform:scaleX(0.886);font-size:6.3px;color:#000;right:437.40px;transform-origin:100% 0;">0.00</div><div class="t" style="top:449.80px;transform:scaleX(0.886);font-size:6.3px;color:#000;right:404.90px;transform-origin:100% 0;">0.00</div><div class="t" style="top:449.80px;transform:scaleX(0.886);font-size:6.3px;color:#000;right:372.40px;transform-origin:100% 0;">-6.89</div><div class="t" style="top:449.80px;transform:scaleX(0.886);font-size:6.3px;color:#000;right:340.40px;transform-origin:100% 0;">0.00</div><div class="t" style="top:449.80px;transform:scaleX(0.945);font-size:6.3px;color:#000;left:376.30px;">Middle</div><div class="t" style="top:449.80px;transform:scaleX(0.945);font-size:6.3px;color:#000;left:411.80px;">Middle</div><div class="t" style="top:449.80px;transform:scaleX(0.945);font-size:6.3px;color:#000;left:447.10px;">None</div><div class="t" style="top:449.80px;transform:scaleX(0.886);font-size:6.3px;color:#000;right:201.20px;transform-origin:100% 0;">0</div><div class="t" style="top:449.80px;transform:scaleX(0.945);font-size:6.3px;color:#000;left:515.50px;">Middle</div><div class="t" style="top:449.80px;transform:scaleX(0.945);font-size:6.3px;color:#000;left:551.00px;">Middle</div><div class="t" style="top:458.35px;transform:scaleX(0.984);font-size:6.3px;color:#222;left:68.00px;width:120px;text-align:center;transform-origin:50% 0;">2</div><div class="t" style="top:458.35px;transform:scaleX(0.945);font-size:6.3px;color:#000;left:142.90px;"><u>G</u>lobal</div><div class="t" style="top:458.35px;transform:scaleX(0.886);font-size:6.3px;color:#000;right:502.20px;transform-origin:100% 0;">0.00</div><div class="t" style="top:458.35px;transform:scaleX(0.886);font-size:6.3px;color:#000;right:469.70px;transform-origin:100% 0;">-7.56</div><div class="t" style="top:458.35px;transform:scaleX(0.886);font-size:6.3px;color:#000;right:437.40px;transform-origin:100% 0;">0.00</div><div class="t" style="top:458.35px;transform:scaleX(0.886);font-size:6.3px;color:#000;right:404.90px;transform-origin:100% 0;">0.00</div><div class="t" style="top:458.35px;transform:scaleX(0.886);font-size:6.3px;color:#000;right:372.40px;transform-origin:100% 0;">-7.56</div><div class="t" style="top:458.35px;transform:scaleX(0.886);font-size:6.3px;color:#000;right:340.40px;transform-origin:100% 0;">0.00</div><div class="t" style="top:458.35px;transform:scaleX(0.945);font-size:6.3px;color:#000;left:376.30px;">Middle</div><div class="t" style="top:458.35px;transform:scaleX(0.945);font-size:6.3px;color:#000;left:411.80px;">Middle</div><div class="t" style="top:458.35px;transform:scaleX(0.945);font-size:6.3px;color:#000;left:447.10px;">None</div><div class="t" style="top:458.35px;transform:scaleX(0.886);font-size:6.3px;color:#000;right:201.20px;transform-origin:100% 0;">0</div><div class="t" style="top:458.35px;transform:scaleX(0.945);font-size:6.3px;color:#000;left:515.50px;">Middle</div><div class="t" style="top:458.35px;transform:scaleX(0.945);font-size:6.3px;color:#000;left:551.00px;">Middle</div><div class="t" style="top:466.90px;transform:scaleX(0.984);font-size:6.3px;color:#222;left:68.00px;width:120px;text-align:center;transform-origin:50% 0;">3</div><div class="t" style="top:466.90px;transform:scaleX(0.945);font-size:6.3px;color:#000;left:142.90px;"><u>G</u>lobal</div><div class="t" style="top:466.90px;transform:scaleX(0.886);font-size:6.3px;color:#000;right:502.20px;transform-origin:100% 0;">0.00</div><div class="t" style="top:466.90px;transform:scaleX(0.886);font-size:6.3px;color:#000;right:469.70px;transform-origin:100% 0;">-7.56</div><div class="t" style="top:466.90px;transform:scaleX(0.886);font-size:6.3px;color:#000;right:437.40px;transform-origin:100% 0;">0.00</div><div class="t" style="top:466.90px;transform:scaleX(0.886);font-size:6.3px;color:#000;right:404.90px;transform-origin:100% 0;">0.00</div><div class="t" style="top:466.90px;transform:scaleX(0.886);font-size:6.3px;color:#000;right:372.40px;transform-origin:100% 0;">-7.56</div><div class="t" style="top:466.90px;transform:scaleX(0.886);font-size:6.3px;color:#000;right:340.40px;transform-origin:100% 0;">0.00</div><div class="t" style="top:466.90px;transform:scaleX(0.945);font-size:6.3px;color:#000;left:376.30px;">Middle</div><div class="t" style="top:466.90px;transform:scaleX(0.945);font-size:6.3px;color:#000;left:411.80px;">Middle</div><div class="t" style="top:466.90px;transform:scaleX(0.945);font-size:6.3px;color:#000;left:447.10px;">None</div><div class="t" style="top:466.90px;transform:scaleX(0.886);font-size:6.3px;color:#000;right:201.20px;transform-origin:100% 0;">0</div><div class="t" style="top:466.90px;transform:scaleX(0.945);font-size:6.3px;color:#000;left:515.50px;">Middle</div><div class="t" style="top:466.90px;transform:scaleX(0.945);font-size:6.3px;color:#000;left:551.00px;">Middle</div><div class="t" style="top:475.45px;transform:scaleX(0.984);font-size:6.3px;color:#222;left:68.00px;width:120px;text-align:center;transform-origin:50% 0;">4</div><div class="t" style="top:475.45px;transform:scaleX(0.945);font-size:6.3px;color:#000;left:142.90px;"><u>G</u>lobal</div><div class="t" style="top:475.45px;transform:scaleX(0.886);font-size:6.3px;color:#000;right:502.20px;transform-origin:100% 0;">0.00</div><div class="t" style="top:475.45px;transform:scaleX(0.886);font-size:6.3px;color:#000;right:469.70px;transform-origin:100% 0;">0.00</div><div class="t" style="top:475.45px;transform:scaleX(0.886);font-size:6.3px;color:#000;right:437.40px;transform-origin:100% 0;">9.72</div><div class="t" style="top:475.45px;transform:scaleX(0.886);font-size:6.3px;color:#000;right:404.90px;transform-origin:100% 0;">0.00</div><div class="t" style="top:475.45px;transform:scaleX(0.886);font-size:6.3px;color:#000;right:372.40px;transform-origin:100% 0;">0.00</div><div class="t" style="top:475.45px;transform:scaleX(0.886);font-size:6.3px;color:#000;right:340.40px;transform-origin:100% 0;">9.72</div><div class="t" style="top:475.45px;transform:scaleX(0.945);font-size:6.3px;color:#000;left:376.30px;">Middle</div><div class="t" style="top:475.45px;transform:scaleX(0.945);font-size:6.3px;color:#000;left:411.80px;">Middle</div><div class="t" style="top:475.45px;transform:scaleX(0.945);font-size:6.3px;color:#000;left:447.10px;">None</div><div class="t" style="top:475.45px;transform:scaleX(0.886);font-size:6.3px;color:#000;right:201.20px;transform-origin:100% 0;">0</div><div class="t" style="top:475.45px;transform:scaleX(0.945);font-size:6.3px;color:#000;left:515.50px;">Middle</div><div class="t" style="top:475.45px;transform:scaleX(0.945);font-size:6.3px;color:#000;left:551.00px;">Middle</div><div class="t" style="top:484.00px;transform:scaleX(0.984);font-size:6.3px;color:#222;left:68.00px;width:120px;text-align:center;transform-origin:50% 0;">5</div><div class="t" style="top:484.00px;transform:scaleX(0.945);font-size:6.3px;color:#000;left:142.90px;"><u>G</u>lobal</div><div class="t" style="top:484.00px;transform:scaleX(0.886);font-size:6.3px;color:#000;right:502.20px;transform-origin:100% 0;">0.00</div><div class="t" style="top:484.00px;transform:scaleX(0.886);font-size:6.3px;color:#000;right:469.70px;transform-origin:100% 0;">0.00</div><div class="t" style="top:484.00px;transform:scaleX(0.886);font-size:6.3px;color:#000;right:437.40px;transform-origin:100% 0;">9.72</div><div class="t" style="top:484.00px;transform:scaleX(0.886);font-size:6.3px;color:#000;right:404.90px;transform-origin:100% 0;">0.00</div><div class="t" style="top:484.00px;transform:scaleX(0.886);font-size:6.3px;color:#000;right:372.40px;transform-origin:100% 0;">0.00</div><div class="t" style="top:484.00px;transform:scaleX(0.886);font-size:6.3px;color:#000;right:340.40px;transform-origin:100% 0;">9.72</div><div class="t" style="top:484.00px;transform:scaleX(0.945);font-size:6.3px;color:#000;left:376.30px;">Middle</div><div class="t" style="top:484.00px;transform:scaleX(0.945);font-size:6.3px;color:#000;left:411.80px;">Middle</div><div class="t" style="top:484.00px;transform:scaleX(0.945);font-size:6.3px;color:#000;left:447.10px;">None</div><div class="t" style="top:484.00px;transform:scaleX(0.886);font-size:6.3px;color:#000;right:201.20px;transform-origin:100% 0;">0</div><div class="t" style="top:484.00px;transform:scaleX(0.945);font-size:6.3px;color:#000;left:515.50px;">Middle</div><div class="t" style="top:484.00px;transform:scaleX(0.945);font-size:6.3px;color:#000;left:551.00px;">Middle</div><div class="t" style="top:492.55px;transform:scaleX(0.984);font-size:6.3px;color:#222;left:68.00px;width:120px;text-align:center;transform-origin:50% 0;">6</div><div class="t" style="top:492.55px;transform:scaleX(0.945);font-size:6.3px;color:#000;left:142.90px;"><u>G</u>lobal</div><div class="t" style="top:492.55px;transform:scaleX(0.886);font-size:6.3px;color:#000;right:502.20px;transform-origin:100% 0;">0.00</div><div class="t" style="top:492.55px;transform:scaleX(0.886);font-size:6.3px;color:#000;right:469.70px;transform-origin:100% 0;">7.56</div><div class="t" style="top:492.55px;transform:scaleX(0.886);font-size:6.3px;color:#000;right:437.40px;transform-origin:100% 0;">0.00</div><div class="t" style="top:492.55px;transform:scaleX(0.886);font-size:6.3px;color:#000;right:404.90px;transform-origin:100% 0;">0.00</div><div class="t" style="top:492.55px;transform:scaleX(0.886);font-size:6.3px;color:#000;right:372.40px;transform-origin:100% 0;">7.56</div><div class="t" style="top:492.55px;transform:scaleX(0.886);font-size:6.3px;color:#000;right:340.40px;transform-origin:100% 0;">0.00</div><div class="t" style="top:492.55px;transform:scaleX(0.945);font-size:6.3px;color:#000;left:376.30px;">Middle</div><div class="t" style="top:492.55px;transform:scaleX(0.945);font-size:6.3px;color:#000;left:411.80px;">Middle</div><div class="t" style="top:492.55px;transform:scaleX(0.945);font-size:6.3px;color:#000;left:447.10px;">None</div><div class="t" style="top:492.55px;transform:scaleX(0.886);font-size:6.3px;color:#000;right:201.20px;transform-origin:100% 0;">0</div><div class="t" style="top:492.55px;transform:scaleX(0.945);font-size:6.3px;color:#000;left:515.50px;">Middle</div><div class="t" style="top:492.55px;transform:scaleX(0.945);font-size:6.3px;color:#000;left:551.00px;">Middle</div><div class="t" style="top:513.80px;transform:scaleX(0.801);font-size:6.0px;color:#2a2a2a;left:64.30px;width:120px;text-align:center;transform-origin:50% 0;">Nodes</div><div class="t" style="top:513.80px;transform:scaleX(0.801);font-size:6.0px;color:#2a2a2a;left:81.50px;width:120px;text-align:center;transform-origin:50% 0;">Lines</div><div class="t" style="top:513.80px;transform:scaleX(0.801);font-size:6.0px;color:#2a2a2a;left:101.00px;width:120px;text-align:center;transform-origin:50% 0;">Materials</div><div class="t" style="top:513.80px;transform:scaleX(0.801);font-size:6.0px;color:#2a2a2a;left:124.30px;width:120px;text-align:center;transform-origin:50% 0;">Surfaces</div><div class="t" style="top:513.80px;transform:scaleX(0.801);font-size:6.0px;color:#2a2a2a;left:144.25px;width:120px;text-align:center;transform-origin:50% 0;">Solids</div><div class="t" style="top:513.80px;transform:scaleX(0.801);font-size:6.0px;color:#2a2a2a;left:165.15px;width:120px;text-align:center;transform-origin:50% 0;">Openings</div><div class="t" style="top:513.80px;transform:scaleX(0.801);font-size:6.0px;color:#2a2a2a;left:196.05px;width:120px;text-align:center;transform-origin:50% 0;">Nodal Supports</div><div class="t" style="top:513.80px;transform:scaleX(0.801);font-size:6.0px;color:#2a2a2a;left:232.00px;width:120px;text-align:center;transform-origin:50% 0;">Line Supports</div><div class="t" style="top:513.80px;transform:scaleX(0.801);font-size:6.0px;color:#2a2a2a;left:269.80px;width:120px;text-align:center;transform-origin:50% 0;">Surface Supports</div><div class="t" style="top:513.80px;transform:scaleX(0.801);font-size:6.0px;color:#2a2a2a;left:304.80px;width:120px;text-align:center;transform-origin:50% 0;">Line Hinges</div><div class="t" style="top:513.80px;transform:scaleX(0.801);font-size:6.0px;color:#2a2a2a;left:344.70px;width:120px;text-align:center;transform-origin:50% 0;">Variable Thicknesses</div><div class="t" style="top:513.80px;transform:scaleX(0.801);font-size:6.0px;color:#2a2a2a;left:387.80px;width:120px;text-align:center;transform-origin:50% 0;">Cross-Sections</div><div class="t" style="top:513.80px;transform:scaleX(0.801);font-size:6.0px;color:#2a2a2a;left:424.75px;width:120px;text-align:center;transform-origin:50% 0;">Member Hinges</div><div class="t" style="top:513.40px;transform:scaleX(0.801);font-size:6.0px;color:#2a2a2a;left:469.50px;width:120px;text-align:center;transform-origin:50% 0;">Member Eccentricities</div><div class="t" style="top:513.80px;transform:scaleX(0.801);font-size:6.0px;color:#2a2a2a;left:516.25px;width:120px;text-align:center;transform-origin:50% 0;">Member Divisions</div><div class="t" style="top:513.80px;transform:scaleX(0.801);font-size:6.0px;color:#2a2a2a;left:548.75px;width:120px;text-align:center;transform-origin:50% 0;">Members</div><div class="t" style="top:513.80px;transform:scaleX(0.801);font-size:6.0px;color:#2a2a2a;left:592.50px;width:120px;text-align:center;transform-origin:50% 0;">Member Elastic Foundations</div></div>
<div class="b" style="left:0px;top:530px;width:720px;height:10px;background:linear-gradient(#ccd5e3,#aebbcf);"></div>
<div class="b" style="left:0px;top:530px;width:720px;height:1px;background:#dbe1eb;"></div>
<svg width="720" height="540" viewBox="0 0 720 540"><g style="filter:blur(0.35px)">
<defs><linearGradient id="tbg" x1="0" y1="0" x2="0" y2="1"><stop offset="0" stop-color="#e6e9f1"/><stop offset="1" stop-color="#cdd2dc"/></linearGradient></defs>
<rect x="2.0" y="25.0" width="535.5" height="10.9" fill="url(#tbg)" rx="1.5"/>
<rect x="539.5" y="25.0" width="43.0" height="10.9" fill="url(#tbg)" rx="1.5"/>
<rect x="2.0" y="36.9" width="536.0" height="10.9" fill="url(#tbg)" rx="1.5"/>
<rect x="539.5" y="36.9" width="45.5" height="10.9" fill="url(#tbg)" rx="1.5"/>
<rect x="3.6" y="26.8" width="0.7" height="0.9" fill="#8a90a0" />
<rect x="3.6" y="28.9" width="0.7" height="0.9" fill="#8a90a0" />
<rect x="3.6" y="31.0" width="0.7" height="0.9" fill="#8a90a0" />
<rect x="3.6" y="33.1" width="0.7" height="0.9" fill="#8a90a0" />
<rect x="541.2" y="26.8" width="0.7" height="0.9" fill="#8a90a0" />
<rect x="541.2" y="28.9" width="0.7" height="0.9" fill="#8a90a0" />
<rect x="541.2" y="31.0" width="0.7" height="0.9" fill="#8a90a0" />
<rect x="541.2" y="33.1" width="0.7" height="0.9" fill="#8a90a0" />
<rect x="3.6" y="38.7" width="0.7" height="0.9" fill="#8a90a0" />
<rect x="3.6" y="40.8" width="0.7" height="0.9" fill="#8a90a0" />
<rect x="3.6" y="42.9" width="0.7" height="0.9" fill="#8a90a0" />
<rect x="3.6" y="45.0" width="0.7" height="0.9" fill="#8a90a0" />
<rect x="541.2" y="38.7" width="0.7" height="0.9" fill="#8a90a0" />
<rect x="541.2" y="40.8" width="0.7" height="0.9" fill="#8a90a0" />
<rect x="541.2" y="42.9" width="0.7" height="0.9" fill="#8a90a0" />
<rect x="541.2" y="45.0" width="0.7" height="0.9" fill="#8a90a0" />
<g transform="translate(10.0,30.4) scale(0.9) translate(-10.0,-30.4)"><polygon points="7.0,26.4 11.5,26.4 13.0,27.9 13.0,34.4 7.0,34.4" fill="#fdfdfd" stroke="#8a8a92" stroke-width="0.6"/></g>
<g transform="translate(19.7,30.4) scale(0.9) translate(-19.7,-30.4)"><polygon points="15.7,27.9 18.7,27.9 19.7,28.9 22.7,28.9 22.7,33.9 15.7,33.9" fill="#e8c43c" stroke="#9a7a10" stroke-width="0.5"/><polygon points="15.7,33.9 17.2,30.2 23.9,30.2 22.7,33.9" fill="#f4dc6a" stroke="#9a7a10" stroke-width="0.4"/><path d="M20.7 26.9 q2 -1 3 1" fill="none" stroke="#2a50c8" stroke-width="0.7"/></g>
<rect x="26.5" y="28.4" width="5.6" height="5.4" fill="#d8a040" rx="0.6" stroke="#8a621a" stroke-width="0.4"/><polygon points="26.5,28.4 28.3,26.8 33.5,26.8 32.1,28.4" fill="#f0d088" stroke="#8a621a" stroke-width="0.4"/><polygon points="32.1,28.4 33.5,26.8 33.5,32.2 32.1,33.8" fill="#8a621a" stroke="none" stroke-width="0.6"/><rect x="27.3" y="30.0" width="4.0" height="0.9" fill="#8a621a" /><rect x="27.3" y="31.8" width="4.0" height="0.7" fill="#f0d088" />
<rect x="36.3" y="28.4" width="5.6" height="5.4" fill="#4a6ac8" rx="0.6" stroke="#22327a" stroke-width="0.4"/><polygon points="36.3,28.4 38.1,26.8 43.3,26.8 41.9,28.4" fill="#9ab0e8" stroke="#22327a" stroke-width="0.4"/><polygon points="41.9,28.4 43.3,26.8 43.3,32.2 41.9,33.8" fill="#22327a" stroke="none" stroke-width="0.6"/><rect x="37.1" y="30.0" width="4.0" height="0.9" fill="#22327a" /><rect x="37.1" y="31.8" width="4.0" height="0.7" fill="#9ab0e8" />
<g transform="translate(49.5,30.4) scale(0.9) translate(-49.5,-30.4)"><rect x="45.9" y="26.8" width="7.2" height="7.2" fill="#6464c8" rx="0.6" stroke="#3a3a8a" stroke-width="0.5"/><rect x="47.3" y="27.1" width="4.4" height="3.0" fill="#dcdcf2" /><rect x="47.5" y="31.4" width="4.0" height="2.6" fill="#34346a" /><rect x="49.9" y="31.8" width="1.0" height="1.8" fill="#c8c8e8" /></g>
<g transform="translate(59.0,30.4) scale(0.9) translate(-59.0,-30.4)"><rect x="55.2" y="26.9" width="7.6" height="7.0" fill="#d8c4a4" stroke="#8a7a68" stroke-width="0.5"/><rect x="55.2" y="26.9" width="7.6" height="1.6" fill="#a89880" /><line x1="55.2" y1="30.6" x2="62.8" y2="30.6" stroke="#a89880" stroke-width="0.4"/><line x1="55.2" y1="32.3" x2="62.8" y2="32.3" stroke="#a89880" stroke-width="0.4"/><line x1="57.8" y1="28.4" x2="57.8" y2="33.9" stroke="#a89880" stroke-width="0.4"/><line x1="60.4" y1="28.4" x2="60.4" y2="33.9" stroke="#a89880" stroke-width="0.4"/></g>
<g transform="translate(69.0,30.4) scale(0.9) translate(-69.0,-30.4)"><rect x="66.6" y="26.6" width="4.8" height="3.0" fill="#f4f4fa" stroke="#8a8a9a" stroke-width="0.4"/><rect x="65.0" y="29.2" width="8.0" height="3.6" fill="#b4b4cc" rx="0.8" stroke="#7a7a92" stroke-width="0.4"/><rect x="66.4" y="31.9" width="5.2" height="2.3" fill="#e8e8f0" stroke="#8a8a9a" stroke-width="0.4"/></g>
<g transform="translate(78.7,30.4) scale(0.9) translate(-78.7,-30.4)"><rect x="75.1" y="26.6" width="5.6" height="7.4" fill="#e4e4ea" stroke="#8a8a9a" stroke-width="0.5"/><circle cx="79.5" cy="31.0" r="2.2" fill="#cfe0f4" stroke="#2a50c8" stroke-width="0.8"/><line x1="81.0" y1="32.6" x2="82.7" y2="34.3" stroke="#2a50c8" stroke-width="1"/></g>
<rect x="85.7" y="25.9" width="0.6" height="9.0" fill="#a8aebb" /><rect x="86.3" y="25.9" width="0.5" height="9.0" fill="#eef1f6" />
<g transform="translate(93.2,30.4) scale(0.9) translate(-93.2,-30.4)"><path d="M91.2 30.599999999999998 q2.6 -4.2 5.4 -0.6 q0.8 1.6 0 3" fill="none" stroke="#1a2a7a" stroke-width="1.7"/><polygon points="89.0,27.6 89.2,32.4 93.2,31.0" fill="#1a2a7a" stroke="none" stroke-width="0.6"/><rect x="89.4" y="33.4" width="7.6" height="0.8" fill="#1a2a7a" /></g>
<g transform="translate(102.5,30.4) scale(0.9) translate(-102.5,-30.4)"><path d="M104.5 30.599999999999998 q-2.6 -4.2 -5.4 -0.6 q-0.8 1.6 0 3" fill="none" stroke="#a8b2c8" stroke-width="1.7"/><polygon points="106.7,27.6 106.5,32.4 102.5,31.0" fill="#a8b2c8" stroke="none" stroke-width="0.6"/><rect x="98.7" y="33.4" width="7.6" height="0.8" fill="#b4bccc" /></g>
<rect x="108.7" y="25.9" width="0.6" height="9.0" fill="#a8aebb" /><rect x="109.3" y="25.9" width="0.5" height="9.0" fill="#eef1f6" />
<g transform="translate(115.8,30.4) scale(0.9) translate(-115.8,-30.4)"><polygon points="112.0,33.7 114.8,27.1 119.6,27.1 116.8,33.7" fill="#f2d52a" stroke="#e02020" stroke-width="0.8"/><line x1="113.5" y1="32.4" x2="118.1" y2="28.4" stroke="#1a2a7a" stroke-width="0.6"/><circle cx="112.2" cy="33.6" r="0.7" fill="#7a1a1a" /><circle cx="119.4" cy="27.2" r="0.7" fill="#7a1a1a" /></g>
<g transform="translate(125.8,30.4) scale(0.9) translate(-125.8,-30.4)"><circle cx="125.2" cy="29.8" r="2.8" fill="#f2d52a" stroke="#e02020" stroke-width="0.7"/><line x1="127.2" y1="32.0" x2="129.6" y2="34.2" stroke="#e02020" stroke-width="1.1"/><rect x="124.4" y="29.2" width="2.0" height="1.2" fill="#fff" /></g>
<g transform="translate(135.8,30.4) scale(0.9) translate(-135.8,-30.4)"><circle cx="135.8" cy="30.4" r="2.9" fill="#fff4c8" stroke="#e0b818" stroke-width="1.7"/><circle cx="135.8" cy="30.4" r="1.3" fill="#fff" stroke="#e02020" stroke-width="0.7"/><circle cx="138.4" cy="33.0" r="0.8" fill="#e02020" /><circle cx="133.4" cy="27.8" r="0.7" fill="#e02020" /></g>
<g transform="translate(145.3,30.4) scale(0.9) translate(-145.3,-30.4)"><rect x="141.9" y="26.8" width="7.0" height="5.8" fill="#f2d52a" stroke="#b8960c" stroke-width="0.5"/><polygon points="141.9,32.6 144.5,32.6 142.7,34.4" fill="#555" stroke="none" stroke-width="0.6"/><rect x="145.9" y="27.8" width="1.8" height="2.4" fill="#555" /><rect x="143.1" y="28.8" width="1.6" height="0.7" fill="#8a7a30" /></g>
<g transform="translate(155.0,30.4) scale(0.9) translate(-155.0,-30.4)"><polygon points="151.2,28.6 154.2,28.6 155.0,27.0 158.8,27.0 158.8,34.0 151.2,34.0" fill="#f4dc50" stroke="#b8960c" stroke-width="0.5"/><rect x="152.6" y="30.2" width="4.8" height="0.6" fill="#8a7a30" /></g>
<rect x="162.0" y="25.9" width="0.6" height="9.0" fill="#a8aebb" /><rect x="162.6" y="25.9" width="0.5" height="9.0" fill="#eef1f6" />
<g transform="translate(169.2,30.4) scale(0.9) translate(-169.2,-30.4)"><rect x="164.5" y="25.8" width="9.4" height="9.2" fill="#fde8b8" rx="1" stroke="#e8a838" stroke-width="0.8"/><rect x="166.2" y="27.4" width="6.0" height="6.0" fill="#d8c4a4" stroke="#8a7a68" stroke-width="0.4"/><rect x="168.5" y="28.2" width="1.4" height="4.4" fill="#4a4238" /></g>
<g transform="translate(179.0,30.4) scale(0.9) translate(-179.0,-30.4)"><rect x="174.3" y="25.8" width="9.4" height="9.2" fill="#fde8b8" rx="1" stroke="#e8a838" stroke-width="0.8"/><rect x="175.8" y="27.4" width="6.4" height="6.0" fill="#e4d8c4" stroke="#8a7a68" stroke-width="0.4"/><rect x="175.8" y="27.4" width="6.4" height="1.4" fill="#9a8a78" /><rect x="175.8" y="30.6" width="6.4" height="0.4" fill="#9a8a78" /></g>
<rect x="185.7" y="25.9" width="0.6" height="9.0" fill="#a8aebb" /><rect x="186.3" y="25.9" width="0.5" height="9.0" fill="#eef1f6" />
<g transform="translate(191.7,30.4) scale(0.9) translate(-191.7,-30.4)"><circle cx="190.9" cy="28.8" r="2.1" fill="#f2d52a" stroke="#b8960c" stroke-width="0.4"/><rect x="188.1" y="32.6" width="7.2" height="1.4" fill="#3a3a4a" /><rect x="193.3" y="30.0" width="1.6" height="2.8" fill="#4a6ab0" /></g>
<g transform="translate(301.7,30.4) scale(0.9) translate(-301.7,-30.4)"><path d="M303.09999999999997 28.2 L300.5 30.4 L303.09999999999997 32.6" fill="none" stroke="#6a8ae0" stroke-width="1.5"/></g>
<g transform="translate(310.8,30.4) scale(0.9) translate(-310.8,-30.4)"><path d="M309.40000000000003 28.2 L312.0 30.4 L309.40000000000003 32.6" fill="none" stroke="#2a50c8" stroke-width="1.5"/></g>
<g transform="translate(321.0,30.4) scale(0.9) translate(-321.0,-30.4)"><circle cx="321.6" cy="28.8" r="2.4" fill="#1a2a7a" /><polygon points="317.5,32.2 323.6,29.6 324.2,32.2" fill="#1a2a7a" stroke="none" stroke-width="0.6"/><rect x="317.2" y="33.2" width="7.6" height="0.9" fill="#1a2a7a" /></g>
<g transform="translate(331.0,30.4) scale(0.9) translate(-331.0,-30.4)"><line x1="328.0" y1="26.8" x2="328.0" y2="34.0" stroke="#8a8f9a" stroke-width="0.6"/><line x1="328.0" y1="33.8" x2="334.8" y2="33.8" stroke="#8a8f9a" stroke-width="0.6"/><rect x="329.6" y="26.8" width="0.7" height="2.0" fill="#6a6a7a" /><rect x="331.4" y="26.8" width="0.7" height="2.0" fill="#6a6a7a" /><rect x="333.2" y="26.8" width="0.7" height="2.0" fill="#6a6a7a" /><line x1="328.0" y1="33.4" x2="332.0" y2="29.9" stroke="#c4c8d2" stroke-width="0.6"/></g>
<g transform="translate(341.0,30.4) scale(0.9) translate(-341.0,-30.4)"><circle cx="340.8" cy="29.0" r="2.5" fill="#1a2a7a" /><circle cx="342.0" cy="28.6" r="1.0" fill="#7a9ae0" /><rect x="337.2" y="32.8" width="7.6" height="1.0" fill="#e02020" /><rect x="340.0" y="31.4" width="4.6" height="1.0" fill="#1a2a7a" /></g>
<g transform="translate(350.3,30.4) scale(0.9) translate(-350.3,-30.4)"><rect x="348.9" y="27.0" width="0.7" height="1.8" fill="#7a7a8a" /><rect x="350.7" y="27.0" width="0.7" height="1.8" fill="#7a7a8a" /><rect x="352.5" y="27.0" width="0.7" height="1.8" fill="#7a7a8a" /><line x1="346.5" y1="32.0" x2="350.5" y2="32.0" stroke="#e02020" stroke-width="0.9"/><line x1="350.5" y1="32.0" x2="354.1" y2="32.0" stroke="#7a8ad0" stroke-width="0.9"/><line x1="346.5" y1="33.6" x2="354.1" y2="33.6" stroke="#c4c8d2" stroke-width="0.6"/></g>
<rect x="356.4" y="25.9" width="0.6" height="9.0" fill="#a8aebb" /><rect x="357.0" y="25.9" width="0.5" height="9.0" fill="#eef1f6" />
<g transform="translate(364.0,30.4) scale(0.9) translate(-364.0,-30.4)"><path d="M362.4 33.199999999999996 V27.599999999999998 L360.2 31.0 H363.8" fill="none" stroke="#26389a" stroke-width="1"/><path d="M367.6 27.799999999999997 q-2.2 -0.8 -2.2 1.4 V33.4 M364.2 30.2 H367.2" fill="none" stroke="#26389a" stroke-width="1"/></g>
<g transform="translate(374.0,30.4) scale(0.9) translate(-374.0,-30.4)"><rect x="370.6" y="29.6" width="6.8" height="2.6" fill="#f2d52a" /><rect x="370.6" y="27.8" width="6.8" height="1.8" fill="#7a8ac0" /><rect x="370.1" y="27.2" width="1.1" height="6.8" fill="#1a2a7a" /><rect x="376.8" y="27.2" width="1.1" height="6.8" fill="#1a2a7a" /><rect x="370.1" y="32.0" width="7.8" height="0.9" fill="#1a2a7a" /><rect x="372.4" y="26.8" width="3.2" height="1.2" fill="#e8ecf8" /></g>
<g transform="translate(384.0,30.4) scale(0.9) translate(-384.0,-30.4)"><rect x="380.6" y="29.6" width="6.8" height="2.6" fill="#f2d52a" /><rect x="380.6" y="27.8" width="6.8" height="1.8" fill="#7a8ac0" /><rect x="380.1" y="27.2" width="1.1" height="6.8" fill="#1a2a7a" /><rect x="386.8" y="27.2" width="1.1" height="6.8" fill="#1a2a7a" /><rect x="380.1" y="32.0" width="7.8" height="0.9" fill="#1a2a7a" /><rect x="382.4" y="26.8" width="3.2" height="1.2" fill="#e8ecf8" /></g>
<rect x="391.4" y="25.9" width="0.6" height="9.0" fill="#a8aebb" /><rect x="392.0" y="25.9" width="0.5" height="9.0" fill="#eef1f6" />
<g transform="translate(399.0,30.4) scale(0.9) translate(-399.0,-30.4)"><polygon points="395.0,31.4 398.0,27.8 403.0,28.4 401.0,32.4" fill="#8a7a68" stroke="#5a4a3a" stroke-width="0.4"/><rect x="395.0" y="32.8" width="8.0" height="1.2" fill="#9a9aa8" /><polygon points="397.0,30.2 399.4,28.2 401.6,29.0" fill="#d8c8b0" stroke="none" stroke-width="0.6"/></g>
<g transform="translate(409.0,30.4) scale(0.9) translate(-409.0,-30.4)"><rect x="405.2" y="26.6" width="7.6" height="7.6" fill="#c4c8d8" /><polygon points="406.0,30.4 409.0,27.4 412.0,30.4 409.0,33.4" fill="#8aa0e8" stroke="#3a50b8" stroke-width="0.6"/><circle cx="409.0" cy="30.4" r="0.9" fill="#fff" /></g>
<g transform="translate(419.0,30.4) scale(0.9) translate(-419.0,-30.4)"><rect x="414.3" y="25.8" width="9.4" height="9.2" fill="#fcd890" rx="1" stroke="#e8a838" stroke-width="0.8"/><polygon points="415.5,30.4 419.0,27.4 422.5,30.4 419.0,33.4" fill="#2a50c8" stroke="none" stroke-width="0.6"/><line x1="415.4" y1="32.4" x2="422.6" y2="28.4" stroke="#e02020" stroke-width="0.9"/></g>
<g transform="translate(429.0,30.4) scale(0.9) translate(-429.0,-30.4)"><polygon points="425.4,30.4 429.0,26.8 432.6,30.4 429.0,34.0" fill="#2a4ab0" stroke="none" stroke-width="0.6"/><rect x="427.0" y="28.4" width="4.0" height="4.0" fill="#7a9ae8" stroke="#d02020" stroke-width="0.8"/><circle cx="429.0" cy="30.4" r="0.9" fill="#fff" /><polygon points="432.9,26.6 430.6,27.0 432.4,29.0" fill="#e02020" stroke="none" stroke-width="0.6"/></g>
<g transform="translate(439.0,30.4) scale(0.9) translate(-439.0,-30.4)"><polygon points="435.2,30.4 439.0,26.6 442.8,30.4 439.0,34.2" fill="#2a4ab0" stroke="none" stroke-width="0.6"/><rect x="436.8" y="28.2" width="4.4" height="4.4" fill="#3a5ac0" stroke="#c01818" stroke-width="1"/><line x1="435.2" y1="30.4" x2="442.8" y2="30.4" stroke="#7a9ae8" stroke-width="0.6"/><line x1="439.0" y1="26.6" x2="439.0" y2="34.2" stroke="#7a9ae8" stroke-width="0.6"/></g>
<g transform="translate(448.3,30.4) scale(0.9) translate(-448.3,-30.4)"><rect x="445.9" y="29.8" width="5.0" height="4.0" fill="#c8d0ec" stroke="#9aa4d0" stroke-width="0.4"/><polygon points="445.3,29.8 448.3,27.0 451.5,29.8" fill="#f0c0c8" stroke="none" stroke-width="0.6"/><rect x="447.5" y="31.0" width="1.6" height="0.9" fill="#e89098" /></g>
<g transform="translate(458.7,30.4) scale(0.9) translate(-458.7,-30.4)"><rect x="458.1" y="26.8" width="4.4" height="3.4" fill="#d8deec" stroke="#5a6a9a" stroke-width="0.6"/><line x1="458.3" y1="30.0" x2="455.3" y2="33.8" stroke="#6a7a9a" stroke-width="1.1"/></g>
<rect x="464.7" y="25.9" width="0.6" height="9.0" fill="#a8aebb" /><rect x="465.3" y="25.9" width="0.5" height="9.0" fill="#eef1f6" />
<g transform="translate(472.5,30.4) scale(0.9) translate(-472.5,-30.4)"><path d="M469.9 28.0 q4 0 3 2.6 q-0.6 2 2 2.4" fill="none" stroke="#8a8f9c" stroke-width="1.2"/><circle cx="469.7" cy="28.0" r="1.1" fill="#fff" stroke="#6a6f7c" stroke-width="0.6"/><circle cx="475.1" cy="33.0" r="1.1" fill="#fff" stroke="#6a6f7c" stroke-width="0.6"/></g>
<g transform="translate(482.0,30.4) scale(0.9) translate(-482.0,-30.4)"><ellipse cx="482" cy="30.4" rx="3.5" ry="2.3" fill="#e8eefc" stroke="#3a6ad8" stroke-width="0.9"/><line x1="482" y1="26.5" x2="482" y2="34.3" stroke="#e02020" stroke-width="0.7" stroke-dasharray="1.2 0.6"/></g>
<g transform="translate(492.0,30.4) scale(0.9) translate(-492.0,-30.4)"><polygon points="492.0,27.0 495.4,33.4 488.6,33.4" fill="#d8d8de" stroke="#7a7a86" stroke-width="0.6"/><line x1="492.0" y1="26.6" x2="492.0" y2="34.0" stroke="#e02020" stroke-width="0.7"/><line x1="490.4" y1="30.8" x2="493.6" y2="30.8" stroke="#7a7a86" stroke-width="0.5"/></g>
<g transform="translate(502.0,30.4) scale(0.9) translate(-502.0,-30.4)"><line x1="499.0" y1="27.4" x2="505.0" y2="33.4" stroke="#e02020" stroke-width="0.9"/><line x1="499.0" y1="33.4" x2="505.0" y2="27.4" stroke="#e02020" stroke-width="0.9"/><circle cx="498.8" cy="27.2" r="0.8" fill="#6a1414" /><circle cx="505.2" cy="27.2" r="0.8" fill="#6a1414" /><circle cx="498.8" cy="33.6" r="0.8" fill="#6a1414" /><circle cx="505.2" cy="33.6" r="0.8" fill="#6a1414" /></g>
<g transform="translate(512.0,30.4) scale(0.9) translate(-512.0,-30.4)"><circle cx="511.6" cy="31.0" r="3.2" fill="#141a5a" /><circle cx="513.8" cy="28.0" r="1.4" fill="#141a5a" /><circle cx="511.0" cy="30.4" r="1.1" fill="#fff" /></g>
<g transform="translate(522.0,30.4) scale(0.9) translate(-522.0,-30.4)"><rect x="518.4" y="26.6" width="7.2" height="7.6" fill="#d8c8a8" stroke="#6a5a48" stroke-width="0.5"/><circle cx="522.0" cy="30.4" r="2.4" fill="#1a2a7a" /><circle cx="522.6" cy="29.8" r="0.9" fill="#e8e8f8" /></g>
<g transform="translate(531.7,30.4) scale(0.9) translate(-531.7,-30.4)"><line x1="529.3" y1="31.8" x2="534.1" y2="28.4" stroke="#3a5ac8" stroke-width="0.8"/><line x1="529.3" y1="31.8" x2="533.1" y2="33.2" stroke="#3a5ac8" stroke-width="0.8"/><circle cx="529.3" cy="31.8" r="1.4" fill="#4a6ad8" /><circle cx="534.1" cy="28.4" r="1.5" fill="#4a6ad8" /><circle cx="533.3" cy="33.0" r="1.2" fill="#4a6ad8" /></g>
<g transform="translate(547.5,30.4) scale(0.9) translate(-547.5,-30.4)"><rect x="545.1" y="26.6" width="6.4" height="5.8" fill="#2a5ab0" stroke="#1a3a80" stroke-width="0.4"/><rect x="546.7" y="27.8" width="3.4" height="2.6" fill="#86a8e4" /><path d="M543.7 31.0 L546.3 33.8 L547.3 30.799999999999997" fill="none" stroke="#e02020" stroke-width="1.1"/><polygon points="544.5,34.2 547.3,34.2 546.1,32.0" fill="#e02020" stroke="none" stroke-width="0.6"/></g>
<g transform="translate(557.5,30.4) scale(0.9) translate(-557.5,-30.4)"><rect x="555.1" y="26.6" width="6.4" height="5.8" fill="#2a5ab0" stroke="#1a3a80" stroke-width="0.4"/><rect x="556.7" y="27.8" width="3.4" height="2.6" fill="#86a8e4" /><path d="M553.7 31.0 L556.3 33.8 L557.3 30.799999999999997" fill="none" stroke="#e02020" stroke-width="1.1"/><polygon points="554.5,34.2 557.3,34.2 556.1,32.0" fill="#e02020" stroke="none" stroke-width="0.6"/></g>
<g transform="translate(566.9,30.4) scale(0.9) translate(-566.9,-30.4)"><polygon points="565.5,26.6 569.1,26.6 570.7,28.2 570.7,33.8 565.5,33.8" fill="#f8f4f4" stroke="#b8a8a8" stroke-width="0.4"/><path d="M563.1 33.0 q2.6 -1.2 3.4 -5.6 q0.6 3 3.2 4.6 q-3 -0.4 -6.6 1" fill="#e02020" stroke="#e02020" stroke-width="0.7"/></g>
<g transform="translate(576.7,30.4) scale(0.9) translate(-576.7,-30.4)"><polygon points="575.3,26.6 578.9,26.6 580.5,28.2 580.5,33.8 575.3,33.8" fill="#f8f4f4" stroke="#b8a8a8" stroke-width="0.4"/><path d="M572.9000000000001 33.0 q2.6 -1.2 3.4 -5.6 q0.6 3 3.2 4.6 q-3 -0.4 -6.6 1" fill="#e02020" stroke="#e02020" stroke-width="0.7"/></g>
<rect x="198.3" y="26.4" width="97.0" height="8.2" fill="#ffffff" stroke="#d4d9e4" stroke-width="0.4"/>
<rect x="289.6" y="27.0" width="5.4" height="7.2" fill="#e4e8f0" stroke="#c0c6d2" stroke-width="0.4"/>
<polygon points="291.0,30.0 293.6,30.0 292.3,31.6" fill="#555" stroke="none" stroke-width="0.6"/>
<g transform="translate(9.7,42.3) scale(0.9) translate(-9.7,-42.3)"><circle cx="8.5" cy="41.1" r="1.8" fill="#f2d52a" stroke="#b8960c" stroke-width="0.4"/><circle cx="11.5" cy="44.1" r="1.1" fill="#e02020" /></g>
<polygon points="16.9,42.1 19.1,42.1 18.0,43.3" fill="#4a4a52" stroke="none" stroke-width="0.6"/>
<g transform="translate(25.3,42.3) scale(0.9) translate(-25.3,-42.3)"><line x1="22.7" y1="45.5" x2="28.5" y2="39.3" stroke="#3a3a5a" stroke-width="0.7"/><circle cx="23.9" cy="40.9" r="1.7" fill="#f2d52a" stroke="#b8960c" stroke-width="0.4"/><circle cx="28.5" cy="39.1" r="0.9" fill="#e02020" /><circle cx="22.5" cy="45.7" r="0.9" fill="#e02020" /></g>
<g transform="translate(36.3,42.3) scale(0.9) translate(-36.3,-42.3)"><line x1="33.7" y1="45.3" x2="38.7" y2="39.3" stroke="#3a5ad8" stroke-width="0.9"/><circle cx="34.7" cy="40.5" r="1.7" fill="#f2d52a" stroke="#b8960c" stroke-width="0.4"/><circle cx="38.9" cy="39.3" r="0.8" fill="#e02020" /><circle cx="33.7" cy="45.5" r="0.8" fill="#e02020" /><rect x="37.7" y="43.1" width="1.2" height="0.8" fill="#3a5ad8" /><rect x="37.7" y="44.7" width="1.2" height="0.8" fill="#3a5ad8" /></g>
<polygon points="42.6,42.1 44.8,42.1 43.7,43.3" fill="#4a4a52" stroke="none" stroke-width="0.6"/>
<g transform="translate(52.0,42.3) scale(0.9) translate(-52.0,-42.3)"><circle cx="52.0" cy="42.3" r="3.7" fill="#f4f4f6" stroke="#33333a" stroke-width="0.7"/><path d="M50.8 41.9 L52.2 43.5 L54.6 39.699999999999996" fill="none" stroke="#e02020" stroke-width="0.9"/><circle cx="50.6" cy="40.5" r="0.9" fill="#e8d870" /></g>
<polygon points="58.4,42.1 60.6,42.1 59.5,43.3" fill="#4a4a52" stroke="none" stroke-width="0.6"/>
<rect x="63.7" y="37.8" width="0.6" height="9.0" fill="#a8aebb" /><rect x="64.3" y="37.8" width="0.5" height="9.0" fill="#eef1f6" />
<g transform="translate(71.0,42.3) scale(0.9) translate(-71.0,-42.3)"><path d="M68 46.099999999999994 q0 -3.4 3 -3.4 q3 0 3 3.4z" fill="#2a8a3a" stroke="none" stroke-width="0.8"/><circle cx="71.0" cy="42.1" r="1.5" fill="#2a8a3a" /><circle cx="69.4" cy="39.9" r="1.4" fill="#f2d52a" stroke="#b8960c" stroke-width="0.4"/><circle cx="72.0" cy="39.3" r="1.0" fill="#e02020" /></g>
<g transform="translate(80.5,42.3) scale(0.9) translate(-80.5,-42.3)"><line x1="77.5" y1="43.5" x2="83.5" y2="43.5" stroke="#2a9a3a" stroke-width="0.8"/><circle cx="79.5" cy="40.3" r="1.6" fill="#f2d52a" stroke="#b8960c" stroke-width="0.4"/><rect x="76.7" y="43.9" width="2.2" height="2.0" fill="#2a9a3a" /><rect x="82.1" y="43.9" width="2.2" height="2.0" fill="#2a9a3a" /><circle cx="77.7" cy="42.7" r="0.8" fill="#e02020" /><circle cx="83.3" cy="42.7" r="0.8" fill="#e02020" /></g>
<g transform="translate(90.0,42.3) scale(0.9) translate(-90.0,-42.3)"><polygon points="86.0,43.5 89.4,40.9 94.0,42.7 90.8,45.7" fill="#3a9a6a" stroke="#1a6a4a" stroke-width="0.4"/><polygon points="88.0,43.3 89.8,42.1 92.4,43.1 90.6,44.5" fill="#5a9ae0" stroke="none" stroke-width="0.6"/><circle cx="88.6" cy="40.1" r="1.7" fill="#f2d52a" stroke="#b8960c" stroke-width="0.4"/></g>
<rect x="96.7" y="37.8" width="0.6" height="9.0" fill="#a8aebb" /><rect x="97.3" y="37.8" width="0.5" height="9.0" fill="#eef1f6" />
<g transform="translate(104.7,42.3) scale(0.9) translate(-104.7,-42.3)"><circle cx="102.9" cy="40.5" r="1.7" fill="#f2d52a" stroke="#b8960c" stroke-width="0.4"/><path d="M101.3 45.699999999999996 v-3 h6.8 v3" fill="none" stroke="#1a1a1a" stroke-width="1"/><rect x="103.5" y="41.5" width="3.6" height="1.6" fill="#1a1a1a" /></g>
<polygon points="110.9,42.1 113.1,42.1 112.0,43.3" fill="#4a4a52" stroke="none" stroke-width="0.6"/>
<g transform="translate(119.0,42.3) scale(0.9) translate(-119.0,-42.3)"><circle cx="117.4" cy="40.3" r="1.7" fill="#f2d52a" stroke="#b8960c" stroke-width="0.4"/><line x1="116.0" y1="45.9" x2="120.0" y2="41.9" stroke="#7a7f8c" stroke-width="0.8"/><rect x="119.4" y="39.9" width="3.2" height="2.6" fill="#c8ccd8" stroke="#7a7f8c" stroke-width="0.4"/></g>
<g transform="translate(129.0,42.3) scale(0.9) translate(-129.0,-42.3)"><circle cx="127.6" cy="40.1" r="1.7" fill="#f2d52a" stroke="#b8960c" stroke-width="0.4"/><path d="M126.6 45.9 v-4 h5 v4 M125.6 45.099999999999994 h7" fill="none" stroke="#8a8f9c" stroke-width="0.7"/></g>
<rect x="135.7" y="37.8" width="0.6" height="9.0" fill="#a8aebb" /><rect x="136.3" y="37.8" width="0.5" height="9.0" fill="#eef1f6" />
<g transform="translate(144.0,42.3) scale(0.9) translate(-144.0,-42.3)"><polygon points="141.4,39.7 146.8,39.5 145.4,42.9 147.0,45.3 141.0,44.9 142.6,42.3" fill="#5a72a8" stroke="#3a4a7a" stroke-width="0.4"/><circle cx="141.2" cy="39.5" r="0.9" fill="#e02020" /><circle cx="147.0" cy="39.3" r="0.9" fill="#e02020" /><circle cx="140.8" cy="45.1" r="0.9" fill="#e02020" /><circle cx="147.2" cy="45.5" r="0.9" fill="#e02020" /></g>
<polygon points="150.6,42.1 152.8,42.1 151.7,43.3" fill="#4a4a52" stroke="none" stroke-width="0.6"/>
<g transform="translate(159.5,42.3) scale(0.9) translate(-159.5,-42.3)"><rect x="156.3" y="39.1" width="6.4" height="6.4" fill="#4a6aa8" stroke="#34467a" stroke-width="0.5"/><rect x="157.9" y="40.7" width="3.2" height="3.2" fill="#f4f4fa" /><circle cx="157.9" cy="40.7" r="0.8" fill="#e02020" /><circle cx="161.1" cy="40.7" r="0.8" fill="#e02020" /><circle cx="157.9" cy="43.9" r="0.8" fill="#e02020" /><circle cx="161.1" cy="43.9" r="0.8" fill="#e02020" /></g>
<polygon points="165.9,42.1 168.1,42.1 167.0,43.3" fill="#4a4a52" stroke="none" stroke-width="0.6"/>
<g transform="translate(175.0,42.3) scale(0.9) translate(-175.0,-42.3)"><rect x="171.4" y="41.3" width="3.0" height="4.4" fill="#3a5ab8" stroke="#2a3a80" stroke-width="0.4"/><rect x="175.4" y="39.3" width="3.0" height="5.6" fill="#4a6ac8" stroke="#2a3a80" stroke-width="0.4"/><circle cx="174.6" cy="40.9" r="0.6" fill="#e02020" /><circle cx="175.2" cy="45.1" r="0.6" fill="#e02020" /><rect x="175.9" y="39.7" width="1.0" height="4.8" fill="#8aa4e0" /></g>
<polygon points="181.9,42.1 184.1,42.1 183.0,43.3" fill="#4a4a52" stroke="none" stroke-width="0.6"/>
<g transform="translate(191.0,42.3) scale(0.9) translate(-191.0,-42.3)"><polygon points="187.4,39.9 194.6,39.9 193.6,45.7 188.4,45.7" fill="#3a5ab8" stroke="#1a2a6a" stroke-width="0.5"/><polygon points="187.4,39.9 189.4,38.7 194.6,38.7 194.6,39.9" fill="#8aa4e0" stroke="#1a2a6a" stroke-width="0.4"/><rect x="189.4" y="41.7" width="3.4" height="2.4" fill="#c8d4f0" /></g>
<g transform="translate(201.7,42.3) scale(0.9) translate(-201.7,-42.3)"><rect x="198.3" y="41.7" width="5.4" height="4.0" fill="#5a7ac8" stroke="#2a3a80" stroke-width="0.4"/><circle cx="200.1" cy="40.3" r="1.7" fill="#f2d52a" stroke="#b8960c" stroke-width="0.4"/><rect x="202.7" y="39.3" width="2.6" height="2.6" fill="#8aa4e0" /><circle cx="198.5" cy="45.5" r="0.8" fill="#e02020" /><circle cx="204.1" cy="45.5" r="0.8" fill="#e02020" /></g>
<polygon points="207.9,42.1 210.1,42.1 209.0,43.3" fill="#4a4a52" stroke="none" stroke-width="0.6"/>
<rect x="213.2" y="37.8" width="0.6" height="9.0" fill="#a8aebb" /><rect x="213.8" y="37.8" width="0.5" height="9.0" fill="#eef1f6" />
<g transform="translate(220.0,42.3) scale(0.9) translate(-220.0,-42.3)"><path d="M217 39.699999999999996 h4.6 M217 44.9 h4.6" fill="none" stroke="#6a6f7c" stroke-width="0.8"/><polygon points="220.4,40.1 223.8,42.3 220.4,44.5" fill="#2a50c8" stroke="none" stroke-width="0.6"/><rect x="216.6" y="41.8" width="3.8" height="1.0" fill="#9aa0b0" /></g>
<polygon points="226.9,42.1 229.1,42.1 228.0,43.3" fill="#4a4a52" stroke="none" stroke-width="0.6"/>
<g transform="translate(234.0,42.3) scale(0.9) translate(-234.0,-42.3)"><circle cx="232.4" cy="40.3" r="1.7" fill="#f2d52a" stroke="#b8960c" stroke-width="0.4"/><rect x="234.8" y="39.7" width="1.3" height="4.4" fill="#2a4ab8" /><rect x="234.6" y="44.1" width="1.8" height="1.8" fill="#e02020" /></g>
<g transform="translate(244.7,42.3) scale(0.9) translate(-244.7,-42.3)"><circle cx="242.9" cy="39.9" r="1.6" fill="#f2d52a" stroke="#b8960c" stroke-width="0.4"/><rect x="241.7" y="41.1" width="6.4" height="2.0" fill="#2a4ab8" /><path d="M242.29999999999998 45.099999999999994 v-3.4 M247.5 45.099999999999994 v-3.4 M244.89999999999998 41.5 v3.2" fill="none" stroke="#2a4ab8" stroke-width="1.2"/><rect x="241.1" y="45.1" width="2.0" height="1.0" fill="#e02020" /><rect x="246.5" y="45.1" width="2.0" height="1.0" fill="#e02020" /></g>
<g transform="translate(254.7,42.3) scale(0.9) translate(-254.7,-42.3)"><circle cx="252.9" cy="39.9" r="1.6" fill="#f2d52a" stroke="#b8960c" stroke-width="0.4"/><rect x="251.7" y="41.1" width="6.4" height="2.0" fill="#2a4ab8" /><path d="M252.29999999999998 45.099999999999994 v-3.4 M257.5 45.099999999999994 v-3.4 M254.89999999999998 41.5 v3.2" fill="none" stroke="#2a4ab8" stroke-width="1.2"/><rect x="251.1" y="45.1" width="2.0" height="1.0" fill="#e02020" /><rect x="256.5" y="45.1" width="2.0" height="1.0" fill="#e02020" /></g>
<g transform="translate(264.7,42.3) scale(0.9) translate(-264.7,-42.3)"><rect x="261.3" y="38.9" width="6.8" height="7.0" fill="#1a2a7a" rx="0.6"/><rect x="263.1" y="41.3" width="3.4" height="3.0" fill="#e8c43c" /><rect x="262.9" y="39.1" width="3.6" height="1.6" fill="#8aa4e0" /><line x1="264.9" y1="41.3" x2="264.9" y2="45.7" stroke="#6ac0f0" stroke-width="0.8"/></g>
<g transform="translate(275.8,42.3) scale(0.9) translate(-275.8,-42.3)"><circle cx="274.4" cy="40.3" r="1.7" fill="#f2d52a" stroke="#b8960c" stroke-width="0.4"/><polygon points="273.2,42.9 278.6,42.9 277.4,45.9 274.4,45.9" fill="#3a6ac8" stroke="none" stroke-width="0.6"/><rect x="275.0" y="44.3" width="2.4" height="1.6" fill="#3a9a5a" /></g>
<polygon points="281.9,42.1 284.1,42.1 283.0,43.3" fill="#4a4a52" stroke="none" stroke-width="0.6"/>
<rect x="287.7" y="37.8" width="0.6" height="9.0" fill="#a8aebb" /><rect x="288.3" y="37.8" width="0.5" height="9.0" fill="#eef1f6" />
<g transform="translate(295.5,42.3) scale(0.9) translate(-295.5,-42.3)"><line x1="292.7" y1="38.9" x2="292.7" y2="45.3" stroke="#2a2018" stroke-width="1"/><line x1="292.7" y1="45.3" x2="299.1" y2="45.3" stroke="#2a2018" stroke-width="1"/><polygon points="293.5,44.5 295.1,39.7 296.5,42.5 298.1,39.5 298.5,44.5" fill="#6a4a34" stroke="#2a1a10" stroke-width="0.5"/><circle cx="298.3" cy="39.5" r="0.9" fill="#111" /><circle cx="295.1" cy="39.5" r="0.8" fill="#111" /></g>
<g transform="translate(306.0,42.3) scale(0.9) translate(-306.0,-42.3)"><circle cx="305.4" cy="41.7" r="2.6" fill="#e8eefa" stroke="#3a5ab8" stroke-width="0.9"/><line x1="307.4" y1="43.9" x2="309.8" y2="46.1" stroke="#3a5ab8" stroke-width="1.2"/><rect x="304.8" y="41.1" width="2.8" height="1.2" fill="#e02020" /></g>
<g transform="translate(316.0,42.3) scale(0.9) translate(-316.0,-42.3)"><circle cx="315.4" cy="41.7" r="2.6" fill="#e8eefa" stroke="#3a5ab8" stroke-width="0.9"/><line x1="317.4" y1="43.9" x2="319.8" y2="46.1" stroke="#3a5ab8" stroke-width="1.2"/><line x1="314.0" y1="40.3" x2="316.8" y2="43.1" stroke="#e02020" stroke-width="0.9"/><line x1="314.0" y1="43.1" x2="316.8" y2="40.3" stroke="#e02020" stroke-width="0.9"/></g>
<g transform="translate(326.0,42.3) scale(0.9) translate(-326.0,-42.3)"><rect x="322.6" y="40.3" width="5.4" height="5.4" fill="#dfe6f8" stroke="#3a5ab8" stroke-width="0.8"/><path d="M322.6 40.3 l1.6 -1.6 h5.4 v5.4 l-1.6 1.6 M328 40.3 l1.6 -1.6" fill="none" stroke="#3a5ab8" stroke-width="0.7"/></g>
<g transform="translate(336.0,42.3) scale(0.9) translate(-336.0,-42.3)"><rect x="332.4" y="41.7" width="4.4" height="4.2" fill="#eef2fc" stroke="#8a9ad8" stroke-width="0.6"/><rect x="335.2" y="38.9" width="4.4" height="4.2" fill="#eef2fc" stroke="#8a9ad8" stroke-width="0.6"/><line x1="332.4" y1="41.7" x2="335.2" y2="38.9" stroke="#8a9ad8" stroke-width="0.5"/><line x1="336.8" y1="45.9" x2="339.6" y2="43.1" stroke="#8a9ad8" stroke-width="0.5"/></g>
<rect x="342.2" y="37.8" width="0.6" height="9.0" fill="#a8aebb" /><rect x="342.8" y="37.8" width="0.5" height="9.0" fill="#eef1f6" />
<g transform="translate(349.0,42.3) scale(0.9) translate(-349.0,-42.3)"><rect x="345.4" y="38.7" width="3.4" height="1.5" fill="#2aa02a" /><rect x="348.8" y="38.7" width="3.8" height="1.5" fill="#e02020" /><rect x="345.8" y="40.2" width="1.1" height="5.8" fill="#2a4ab8" /><path d="M348.6 41.699999999999996 L352 45.9 M352 41.699999999999996 L348.6 45.9" fill="none" stroke="#333" stroke-width="0.7"/></g>
<g transform="translate(359.0,42.3) scale(0.9) translate(-359.0,-42.3)"><rect x="355.4" y="38.7" width="3.4" height="1.5" fill="#e02020" /><rect x="358.8" y="38.7" width="3.8" height="1.5" fill="#e02020" /><rect x="355.8" y="40.2" width="1.1" height="5.8" fill="#8a8a96" /><path d="M358.6 41.699999999999996 L360.3 43.699999999999996 L362 41.699999999999996 M360.3 43.699999999999996 V45.9" fill="none" stroke="#333" stroke-width="0.7"/></g>
<g transform="translate(369.0,42.3) scale(0.9) translate(-369.0,-42.3)"><rect x="365.4" y="38.7" width="3.4" height="1.5" fill="#2aa02a" /><rect x="368.8" y="38.7" width="3.8" height="1.5" fill="#e02020" /><rect x="365.8" y="40.2" width="1.1" height="5.8" fill="#3a8a3a" /><path d="M368.6 41.699999999999996 L372 45.9 M372 41.699999999999996 L368.6 45.9" fill="none" stroke="#333" stroke-width="0.7"/></g>
<g transform="translate(379.0,42.3) scale(0.9) translate(-379.0,-42.3)"><rect x="375.4" y="38.7" width="3.4" height="1.5" fill="#2aa02a" /><rect x="378.8" y="38.7" width="3.8" height="1.5" fill="#e02020" /><rect x="375.8" y="40.2" width="1.1" height="5.8" fill="#2a7a2a" /><polygon points="375.0,41.3 376.4,38.9 377.8,41.3" fill="#2a7a2a" stroke="none" stroke-width="0.6"/><rect x="380.2" y="40.7" width="1.0" height="5.2" fill="#e02020" /><polygon points="379.2,43.9 380.7,46.1 382.2,43.9" fill="#e02020" stroke="none" stroke-width="0.6"/></g>
<polygon points="385.9,42.1 388.1,42.1 387.0,43.3" fill="#4a4a52" stroke="none" stroke-width="0.6"/>
<rect x="391.2" y="37.8" width="0.6" height="9.0" fill="#a8aebb" /><rect x="391.8" y="37.8" width="0.5" height="9.0" fill="#eef1f6" />
<g transform="translate(396.5,42.3) scale(0.9) translate(-396.5,-42.3)"><rect x="393.1" y="44.7" width="6.8" height="1.2" fill="#111" /><line x1="393.9" y1="38.9" x2="398.1" y2="43.9" stroke="#111" stroke-width="1.6"/><rect x="392.9" y="38.5" width="2.4" height="2.2" fill="#3a7ad8" /><rect x="397.1" y="40.9" width="2.6" height="2.0" fill="#3a7ad8" /><line x1="393.5" y1="43.3" x2="396.9" y2="43.3" stroke="#3a7ad8" stroke-width="0.8"/></g>
<polygon points="402.4,42.1 404.6,42.1 403.5,43.3" fill="#4a4a52" stroke="none" stroke-width="0.6"/>
<rect x="407.2" y="37.8" width="0.6" height="9.0" fill="#a8aebb" /><rect x="407.8" y="37.8" width="0.5" height="9.0" fill="#eef1f6" />
<g transform="translate(415.0,42.3) scale(0.9) translate(-415.0,-42.3)"><polygon points="411.4,40.7 414.4,38.7 418.6,40.3 417.8,44.7 414.2,46.1 411.8,43.9" fill="#28509a" stroke="#14285a" stroke-width="0.5"/><polygon points="413.4,41.3 416.6,40.7 416.0,43.7 413.8,43.9" fill="#6a9ae0" stroke="none" stroke-width="0.6"/><polygon points="411.8,40.9 414.4,39.1 418.0,40.5 415.4,41.5" fill="#4a78c8" stroke="none" stroke-width="0.6"/></g>
<polygon points="421.4,42.1 423.6,42.1 422.5,43.3" fill="#4a4a52" stroke="none" stroke-width="0.6"/>
<rect x="427.2" y="37.8" width="0.6" height="9.0" fill="#a8aebb" /><rect x="427.8" y="37.8" width="0.5" height="9.0" fill="#eef1f6" />
<g transform="translate(435.0,42.3) scale(0.9) translate(-435.0,-42.3)"><path d="M432.4 45.3 V40.9 L433.8 39.3 H437.8 V45.3" fill="none" stroke="#8a8f9c" stroke-width="0.8"/><circle cx="432.4" cy="45.5" r="0.9" fill="#3a9a4a" /><circle cx="437.8" cy="45.5" r="0.9" fill="#3a9a4a" /><circle cx="437.8" cy="39.3" r="0.8" fill="#e02020" /></g>
<g transform="translate(445.0,42.3) scale(0.9) translate(-445.0,-42.3)"><polygon points="441.2,42.3 443.2,40.5 448.6,40.5 448.6,44.1 443.2,44.1" fill="#dcdce4" stroke="#8a8f9c" stroke-width="0.5"/><rect x="444.4" y="41.7" width="3.0" height="1.2" fill="#e8a0a8" /></g>
<rect x="451.4" y="37.8" width="0.6" height="9.0" fill="#a8aebb" /><rect x="452.0" y="37.8" width="0.5" height="9.0" fill="#eef1f6" />
<g transform="translate(458.7,42.3) scale(0.9) translate(-458.7,-42.3)"><line x1="458.3" y1="38.7" x2="458.3" y2="43.3" stroke="#4a6ad8" stroke-width="0.8"/><line x1="458.3" y1="43.3" x2="454.9" y2="45.7" stroke="#4a6ad8" stroke-width="0.8"/><line x1="458.3" y1="43.3" x2="462.5" y2="44.9" stroke="#e02020" stroke-width="0.8"/><rect x="456.9" y="38.5" width="2.8" height="0.7" fill="#4a6ad8" /></g>
<g transform="translate(468.0,42.3) scale(0.9) translate(-468.0,-42.3)"><path d="M464 42.9 q4 -5.4 8 0 q-4 4.4 -8 0z" fill="#2ac0e0" stroke="#2a6ab8" stroke-width="0.4"/><path d="M465.6 42.9 q2.4 -3.2 4.8 0 q-2.4 2.6 -4.8 0z" fill="#6ad84a" stroke="none" stroke-width="0.8"/><circle cx="468.0" cy="42.9" r="1.1" fill="#f0e030" /><circle cx="468.0" cy="43.1" r="0.5" fill="#e02020" /></g>
<g transform="translate(478.0,42.3) scale(0.9) translate(-478.0,-42.3)"><rect x="474.6" y="39.1" width="6.8" height="6.8" fill="#3a9ad8" stroke="#2a4a9a" stroke-width="0.5"/><rect x="475.8" y="40.3" width="4.4" height="4.4" fill="#5ad85a" /><rect x="476.8" y="41.3" width="2.4" height="2.4" fill="#f0e030" /><rect x="477.5" y="42.0" width="1.0" height="1.0" fill="#e02020" /></g>
<g transform="translate(488.0,42.3) scale(0.9) translate(-488.0,-42.3)"><line x1="486.4" y1="45.9" x2="486.4" y2="40.7" stroke="#2aa02a" stroke-width="0.9"/><polygon points="484.8,41.1 486.4,38.5 488.0,41.1" fill="#2aa02a" stroke="none" stroke-width="0.6"/><line x1="489.8" y1="45.9" x2="489.8" y2="42.7" stroke="#2aa02a" stroke-width="0.9"/><polygon points="488.4,43.1 489.8,40.7 491.2,43.1" fill="#2aa02a" stroke="none" stroke-width="0.6"/><line x1="484.6" y1="43.9" x2="487.6" y2="42.7" stroke="#6ab86a" stroke-width="0.6"/></g>
<g transform="translate(497.5,42.3) scale(0.9) translate(-497.5,-42.3)"><line x1="493.7" y1="44.9" x2="501.3" y2="40.7" stroke="#9aa0b0" stroke-width="1.2"/><line x1="493.7" y1="42.9" x2="501.1" y2="39.3" stroke="#4a6ad8" stroke-width="0.8"/><line x1="496.5" y1="45.3" x2="501.1" y2="43.9" stroke="#e02020" stroke-width="0.8"/></g>
<g transform="translate(508.5,42.3) scale(0.9) translate(-508.5,-42.3)"><rect x="504.7" y="38.7" width="3.2" height="3.0" fill="#f2d52a" rx="0.8" stroke="#b8960c" stroke-width="0.5"/><rect x="508.9" y="38.7" width="3.2" height="3.0" fill="#f2d52a" rx="0.8" stroke="#b8960c" stroke-width="0.5"/><rect x="504.7" y="42.7" width="3.2" height="3.0" fill="#f2d52a" rx="0.8" stroke="#b8960c" stroke-width="0.5"/><rect x="508.9" y="42.7" width="3.2" height="3.0" fill="#f2d52a" rx="0.8" stroke="#b8960c" stroke-width="0.5"/></g>
<polygon points="514.9,42.1 517.1,42.1 516.0,43.3" fill="#4a4a52" stroke="none" stroke-width="0.6"/>
<g transform="translate(523.0,42.3) scale(0.9) translate(-523.0,-42.3)"><line x1="522.6" y1="38.7" x2="522.6" y2="43.3" stroke="#4a6ad8" stroke-width="0.8"/><line x1="522.6" y1="43.3" x2="519.2" y2="45.7" stroke="#4a6ad8" stroke-width="0.8"/><line x1="522.6" y1="43.3" x2="526.8" y2="44.9" stroke="#e02020" stroke-width="0.8"/><rect x="521.2" y="38.5" width="2.8" height="0.7" fill="#4a6ad8" /></g>
<g transform="translate(533.0,42.3) scale(0.9) translate(-533.0,-42.3)"><rect x="529.4" y="38.7" width="7.2" height="7.2" fill="#e4ecfa" stroke="#8aa4d8" stroke-width="0.6"/><line x1="533.0" y1="38.7" x2="533.0" y2="45.9" stroke="#8aa4d8" stroke-width="0.6"/><line x1="529.4" y1="42.3" x2="536.6" y2="42.3" stroke="#8aa4d8" stroke-width="0.6"/></g>
<g transform="translate(546.7,42.3) scale(0.9) translate(-546.7,-42.3)"><rect x="543.9" y="38.5" width="5.6" height="7.6" fill="#444" rx="0.4"/><rect x="544.7" y="39.3" width="3.2" height="1.2" fill="#e02020" /><rect x="544.7" y="40.5" width="3.2" height="1.2" fill="#f0a020" /><rect x="544.7" y="41.7" width="3.2" height="1.2" fill="#f0e030" /><rect x="544.7" y="42.9" width="3.2" height="1.2" fill="#4ad84a" /><rect x="544.7" y="44.1" width="3.2" height="1.2" fill="#2ab0e0" /><rect x="544.7" y="45.3" width="3.2" height="1.2" fill="#3a4ad8" /><rect x="548.1" y="39.3" width="1.0" height="6.6" fill="#d8d8e0" /></g>
<g transform="translate(557.5,42.3) scale(0.9) translate(-557.5,-42.3)"><circle cx="555.7" cy="40.3" r="1.7" fill="#f2d52a" stroke="#b8960c" stroke-width="0.4"/><line x1="554.1" y1="44.9" x2="560.9" y2="40.7" stroke="#333" stroke-width="1.4"/><line x1="556.5" y1="45.5" x2="561.1" y2="42.9" stroke="#3a6ad8" stroke-width="1"/><rect x="558.9" y="39.3" width="2.0" height="1.6" fill="#8aa4e0" /></g>
<polygon points="563.9,42.1 566.1,42.1 565.0,43.3" fill="#4a4a52" stroke="none" stroke-width="0.6"/>
<g transform="translate(573.0,42.3) scale(0.9) translate(-573.0,-42.3)"><rect x="569.4" y="41.5" width="1.3" height="4.4" fill="#e02020" /><rect x="570.7" y="41.0" width="1.3" height="4.9" fill="#f0a020" /><rect x="572.0" y="40.5" width="1.3" height="5.4" fill="#e8e030" /><rect x="573.3" y="40.0" width="1.3" height="5.9" fill="#4ad84a" /><rect x="574.6" y="39.5" width="1.3" height="6.4" fill="#2ab0e0" /><path d="M570 39.3 L573 42.9 L576.8 38.5" fill="none" stroke="#111" stroke-width="1.1"/><rect x="569.4" y="45.3" width="7.4" height="0.8" fill="#3a4ad8" /></g>
<polygon points="579.9,42.1 582.1,42.1 581.0,43.3" fill="#4a4a52" stroke="none" stroke-width="0.6"/>
<rect x="118.0" y="413.1" width="0.7" height="0.9" fill="#8a90a0" />
<rect x="118.0" y="415.2" width="0.7" height="0.9" fill="#8a90a0" />
<rect x="118.0" y="417.3" width="0.7" height="0.9" fill="#8a90a0" />
<rect x="118.0" y="419.4" width="0.7" height="0.9" fill="#8a90a0" />
<g transform="translate(124.3,416.7) scale(0.9) translate(-124.3,-416.7)"><rect x="119.7" y="412.2" width="9.2" height="9.0" fill="#fde4a8" rx="1" stroke="#e8a838" stroke-width="0.8"/></g>
<g transform="translate(124.3,416.7) scale(0.9) translate(-124.3,-416.7)"><rect x="120.9" y="413.3" width="6.8" height="6.8" fill="#e8ece4" stroke="#5a6a7a" stroke-width="0.4"/><rect x="120.9" y="413.3" width="6.8" height="1.6" fill="#2a4a9a" /><polygon points="121.7,419.7 127.1,415.3 127.1,419.7" fill="#4ab84a" stroke="none" stroke-width="0.6"/></g>
<g transform="translate(134.5,416.7) scale(0.9) translate(-134.5,-416.7)"><rect x="131.1" y="413.3" width="6.8" height="6.8" fill="#d4d8e4" stroke="#5a6a7a" stroke-width="0.4"/><rect x="131.1" y="413.3" width="6.8" height="1.6" fill="#2a4a9a" /><path d="M132.9 416.09999999999997 v3.4 M135.5 416.09999999999997 v3.4 M131.7 417.7 h5" fill="none" stroke="#1a2a7a" stroke-width="0.8"/></g>
<g transform="translate(144.5,416.7) scale(0.9) translate(-144.5,-416.7)"><rect x="141.1" y="413.3" width="6.8" height="6.8" fill="#d4d8e4" stroke="#5a6a7a" stroke-width="0.4"/><rect x="141.1" y="413.3" width="6.8" height="1.6" fill="#2a4a9a" /><rect x="143.9" y="415.7" width="1.4" height="3.6" fill="#1a2a7a" /><rect x="142.3" y="418.5" width="4.4" height="1.0" fill="#1a2a7a" /></g>
<g transform="translate(154.0,416.7) scale(0.9) translate(-154.0,-416.7)"><rect x="150.6" y="414.1" width="6.8" height="5.6" fill="#e4e6ee" stroke="#8a90a8" stroke-width="0.4"/><line x1="151.0" y1="418.3" x2="157.0" y2="415.7" stroke="#e02020" stroke-width="0.7"/><rect x="150.6" y="414.1" width="6.8" height="1.2" fill="#6a7ab8" /></g>
<g transform="translate(164.0,416.7) scale(0.9) translate(-164.0,-416.7)"><rect x="160.6" y="413.7" width="6.8" height="6.2" fill="#ece4e4" stroke="#b89a9a" stroke-width="0.4"/><path d="M161.6 418.9 l1.6 -3.6 l1.4 2.4 l1.6 -3" fill="none" stroke="#e06a6a" stroke-width="0.7"/><rect x="160.6" y="413.7" width="6.8" height="1.2" fill="#d8a8a8" /></g>
<rect x="170.4" y="412.7" width="0.6" height="8.0" fill="#a8aebb" /><rect x="171.0" y="412.7" width="0.5" height="8.0" fill="#eef1f6" />
<g transform="translate(177.5,416.7) scale(0.9) translate(-177.5,-416.7)"><rect x="173.9" y="414.1" width="7.2" height="5.4" fill="#c8d4f0" stroke="#3a5ab8" stroke-width="0.5"/><polygon points="174.7,416.7 177.3,414.7 177.3,418.7" fill="#1a3a9a" stroke="none" stroke-width="0.6"/><rect x="177.3" y="416.0" width="2.8" height="1.4" fill="#1a3a9a" /></g>
<g transform="translate(187.2,416.7) scale(0.9) translate(-187.2,-416.7)"><rect x="183.6" y="414.1" width="7.2" height="5.4" fill="#c8d4f0" stroke="#3a5ab8" stroke-width="0.5"/><polygon points="190.0,416.7 187.4,414.7 187.4,418.7" fill="#1a3a9a" stroke="none" stroke-width="0.6"/><rect x="184.6" y="416.0" width="2.8" height="1.4" fill="#1a3a9a" /></g>
<rect x="193.0" y="412.7" width="0.6" height="8.0" fill="#a8aebb" /><rect x="193.6" y="412.7" width="0.5" height="8.0" fill="#eef1f6" />
<g transform="translate(201.0,416.7) scale(0.9) translate(-201.0,-416.7)"><rect x="196.4" y="412.2" width="9.2" height="9.0" fill="#fbcf70" rx="1" stroke="#e8a030" stroke-width="0.8"/></g>
<g transform="translate(201.0,416.7) scale(0.9) translate(-201.0,-416.7)"><path d="M199 413.9 q5 0.4 3.4 4 q-1.4 2.4 -3.6 1.4" fill="none" stroke="#1a2a6a" stroke-width="1.3"/><polygon points="197.6,417.9 200.0,420.7 200.6,417.7" fill="#1a2a6a" stroke="none" stroke-width="0.6"/></g>
<g transform="translate(211.0,416.7) scale(0.9) translate(-211.0,-416.7)"><rect x="206.4" y="412.2" width="9.2" height="9.0" fill="#fbcf70" rx="1" stroke="#e8a030" stroke-width="0.8"/></g>
<g transform="translate(211.0,416.7) scale(0.9) translate(-211.0,-416.7)"><path d="M213.4 413.9 q-5 0.4 -3.6 4 q1.4 2.4 3.2 1" fill="none" stroke="#1a2a6a" stroke-width="1.3"/><circle cx="211.6" cy="416.3" r="1.1" fill="#e02020" /></g>
<g transform="translate(220.7,416.7) scale(0.9) translate(-220.7,-416.7)"><circle cx="220.7" cy="416.7" r="2.8" fill="#dfe4f0" stroke="#8a9ac8" stroke-width="0.9"/><polygon points="222.1,412.9 224.5,414.7 221.9,415.7" fill="#8a9ac8" stroke="none" stroke-width="0.6"/></g>
<rect x="226.2" y="412.7" width="0.6" height="8.0" fill="#a8aebb" /><rect x="226.8" y="412.7" width="0.5" height="8.0" fill="#eef1f6" />
<g transform="translate(234.5,416.7) scale(0.9) translate(-234.5,-416.7)"><rect x="231.3" y="413.5" width="6.4" height="6.4" fill="#cfd8ee" stroke="#a4b0d4" stroke-width="0.5"/><rect x="233.3" y="415.1" width="2.4" height="3.2" fill="#8aa0d8" /></g>
<g transform="translate(244.5,416.7) scale(0.9) translate(-244.5,-416.7)"><rect x="241.3" y="413.5" width="6.4" height="6.4" fill="#cfd8ee" stroke="#a4b0d4" stroke-width="0.5"/><rect x="243.3" y="415.1" width="2.4" height="3.2" fill="#8aa0d8" /></g>
<g transform="translate(254.5,416.7) scale(0.9) translate(-254.5,-416.7)"><rect x="251.3" y="413.5" width="6.4" height="6.4" fill="#cfd8ee" stroke="#a4b0d4" stroke-width="0.5"/><rect x="253.3" y="415.1" width="2.4" height="3.2" fill="#8aa0d8" /></g>
<rect x="260.2" y="412.7" width="0.6" height="8.0" fill="#a8aebb" /><rect x="260.8" y="412.7" width="0.5" height="8.0" fill="#eef1f6" />
<g transform="translate(267.7,416.7) scale(0.9) translate(-267.7,-416.7)"><rect x="264.5" y="413.5" width="6.4" height="6.4" fill="#d8deec" stroke="#b0b8d0" stroke-width="0.5"/><line x1="265.7" y1="414.7" x2="269.7" y2="418.7" stroke="#9aa4c4" stroke-width="0.8"/><line x1="265.7" y1="418.7" x2="269.7" y2="414.7" stroke="#9aa4c4" stroke-width="0.8"/></g>
<rect x="274.0" y="412.7" width="0.6" height="8.0" fill="#a8aebb" /><rect x="274.6" y="412.7" width="0.5" height="8.0" fill="#eef1f6" />
<g transform="translate(282.0,416.7) scale(0.9) translate(-282.0,-416.7)"><line x1="279.0" y1="413.9" x2="285.0" y2="419.5" stroke="#e02020" stroke-width="1"/><line x1="279.0" y1="419.5" x2="285.0" y2="413.9" stroke="#e02020" stroke-width="1"/><line x1="278.2" y1="416.7" x2="285.8" y2="416.7" stroke="#333" stroke-width="0.7"/><line x1="283.6" y1="413.3" x2="283.6" y2="420.1" stroke="#333" stroke-width="0.6"/></g>
<g transform="translate(290.8,416.7) scale(0.9) translate(-290.8,-416.7)"><line x1="287.2" y1="416.7" x2="294.4" y2="416.7" stroke="#e02020" stroke-width="1"/><polygon points="289.8,414.7 292.4,416.7 289.8,418.7" fill="#e02020" stroke="none" stroke-width="0.6"/><line x1="292.8" y1="413.5" x2="292.8" y2="419.9" stroke="#555" stroke-width="0.6"/></g>
<g transform="translate(300.5,416.7) scale(0.9) translate(-300.5,-416.7)"><line x1="296.9" y1="416.7" x2="304.1" y2="416.7" stroke="#e02020" stroke-width="1"/><polygon points="301.5,414.7 304.3,416.7 301.5,418.7" fill="#e02020" stroke="none" stroke-width="0.6"/><line x1="298.5" y1="413.5" x2="298.5" y2="419.9" stroke="#555" stroke-width="0.6"/></g>
<rect x="306.7" y="412.7" width="0.6" height="8.0" fill="#a8aebb" /><rect x="307.3" y="412.7" width="0.5" height="8.0" fill="#eef1f6" />
<g transform="translate(314.2,416.7) scale(0.9) translate(-314.2,-416.7)"><rect x="310.6" y="413.5" width="7.2" height="6.4" fill="#f4f4e8" stroke="#6a6a5a" stroke-width="0.5"/><rect x="310.6" y="413.5" width="7.2" height="2.4" fill="#e8d040" /></g>
<g transform="translate(323.7,416.7) scale(0.9) translate(-323.7,-416.7)"><rect x="320.1" y="413.7" width="7.2" height="6.0" fill="#d4daf0" stroke="#7a86c0" stroke-width="0.5"/><rect x="320.1" y="415.3" width="7.2" height="1.2" fill="#5a6ac8" /><rect x="320.1" y="417.5" width="7.2" height="1.2" fill="#5a6ac8" /></g>
<rect x="330.4" y="412.7" width="0.6" height="8.0" fill="#a8aebb" /><rect x="331.0" y="412.7" width="0.5" height="8.0" fill="#eef1f6" />
<g transform="translate(337.5,416.7) scale(0.9) translate(-337.5,-416.7)"><rect x="334.5" y="413.1" width="6.0" height="7.2" fill="#eee8c8" stroke="#b8b090" stroke-width="0.5"/><rect x="337.1" y="415.7" width="2.4" height="3.4" fill="#d8c860" /><rect x="335.5" y="414.3" width="2.0" height="1.0" fill="#b8b090" /></g>
<rect x="343.4" y="412.7" width="0.6" height="8.0" fill="#a8aebb" /><rect x="344.0" y="412.7" width="0.5" height="8.0" fill="#eef1f6" />
<g transform="translate(350.7,416.7) scale(0.9) translate(-350.7,-416.7)"><polygon points="347.1,416.1 350.1,413.5 354.3,415.1 354.3,419.9 347.1,419.9" fill="#8a8a92" stroke="#44444c" stroke-width="0.5"/><rect x="348.5" y="417.3" width="4.8" height="1.6" fill="#e4e4ea" /><rect x="350.9" y="414.7" width="2.2" height="1.2" fill="#e8b0b0" /></g>
<g transform="translate(360.5,416.7) scale(0.9) translate(-360.5,-416.7)"><path d="M358.9 419.5 V413.9 L356.7 417.3 H360.3" fill="none" stroke="#26389a" stroke-width="1"/><path d="M364.1 414.09999999999997 q-2.2 -0.8 -2.2 1.4 V419.7 M360.7 416.5 H363.7" fill="none" stroke="#26389a" stroke-width="1"/></g>
<g transform="translate(370.2,416.7) scale(0.9) translate(-370.2,-416.7)"><rect x="366.6" y="413.3" width="7.2" height="6.8" fill="#f4faf4" stroke="#1a7a3a" stroke-width="0.9"/><path d="M368.4 415.09999999999997 L372.0 418.5 M368.4 418.5 L372.0 415.09999999999997" fill="none" stroke="#1a7a3a" stroke-width="1"/><rect x="366.6" y="413.3" width="1.4" height="6.8" fill="#1a7a3a" /></g>
<g transform="translate(380.0,416.7) scale(0.9) translate(-380.0,-416.7)"><rect x="376.4" y="414.1" width="7.2" height="5.6" fill="#2a2a32" rx="0.5"/><rect x="377.4" y="415.1" width="4.0" height="1.0" fill="#c8c8d0" /><rect x="377.4" y="417.1" width="5.0" height="0.8" fill="#8a8a96" /></g>
<rect x="385.9" y="412.7" width="0.6" height="8.0" fill="#a8aebb" /><rect x="386.5" y="412.7" width="0.5" height="8.0" fill="#eef1f6" />
<g transform="translate(393.7,416.7) scale(0.9) translate(-393.7,-416.7)"><rect x="392.7" y="413.3" width="4.4" height="4.2" fill="#5a6a8a" stroke="#333" stroke-width="0.4"/><rect x="390.1" y="418.3" width="5.4" height="1.0" fill="#333" /><rect x="390.7" y="416.1" width="1.6" height="2.4" fill="#8a9ab8" /><rect x="393.5" y="419.5" width="3.6" height="0.8" fill="#333" /></g>
<g transform="translate(404.0,416.7) scale(0.9) translate(-404.0,-416.7)"><path d="M401.4 420.09999999999997 q1.4 0.4 1.8 -1.6 l0.8 -3.6 q0.4 -1.8 1.8 -1.4 M402.2 415.9 h2.6" fill="none" stroke="#6a6f7c" stroke-width="0.7"/><path d="M405 417.3 l2.4 2.8 M407.4 417.3 l-2.4 2.8" fill="none" stroke="#6a6f7c" stroke-width="0.6"/></g>
<g transform="translate(413.7,416.7) scale(0.9) translate(-413.7,-416.7)"><path d="M411.3 420.09999999999997 q1.4 0.4 1.8 -1.6 l0.8 -3.6 q0.4 -1.8 1.8 -1.4" fill="none" stroke="#9aa0b0" stroke-width="0.7"/><line x1="410.3" y1="413.5" x2="414.9" y2="417.9" stroke="#e02020" stroke-width="0.9"/><line x1="410.3" y1="417.9" x2="414.9" y2="413.5" stroke="#e02020" stroke-width="0.9"/><path d="M415.09999999999997 417.7 l2 2.4 M417.09999999999997 417.7 l-2 2.4" fill="none" stroke="#8a8f9c" stroke-width="0.6"/></g>
</g></svg>
<svg width="720" height="540" viewBox="0 0 720 540"><rect x="376.6" y="531.3" width="15.1" height="7" fill="#b7bfcc"/><path d="M376.6 538.3 V531.3 H391.7" fill="none" stroke="#4a525e" stroke-width="0.7"/><path d="M376.6 538.3 H391.7 V531.3" fill="none" stroke="#e4e8f0" stroke-width="0.6"/><rect x="392.3" y="531.3" width="16.1" height="7" fill="#dde2ea"/><path d="M392.3 538.3 H408.4 V531.3" fill="none" stroke="#f4f6fa" stroke-width="0.6"/><rect x="409.0" y="531.3" width="23.2" height="7" fill="#b7bfcc"/><path d="M409.0 538.3 V531.3 H432.2" fill="none" stroke="#4a525e" stroke-width="0.7"/><path d="M409.0 538.3 H432.2 V531.3" fill="none" stroke="#e4e8f0" stroke-width="0.6"/><rect x="432.8" y="531.3" width="19.9" height="7" fill="#b7bfcc"/><path d="M432.8 538.3 V531.3 H452.7" fill="none" stroke="#4a525e" stroke-width="0.7"/><path d="M432.8 538.3 H452.7 V531.3" fill="none" stroke="#e4e8f0" stroke-width="0.6"/><rect x="453.3" y="531.3" width="20.1" height="7" fill="#b7bfcc"/><path d="M453.3 538.3 V531.3 H473.4" fill="none" stroke="#4a525e" stroke-width="0.7"/><path d="M453.3 538.3 H473.4 V531.3" fill="none" stroke="#e4e8f0" stroke-width="0.6"/><rect x="474.0" y="531.3" width="11.7" height="7" fill="#b7bfcc"/><path d="M474.0 538.3 V531.3 H485.7" fill="none" stroke="#4a525e" stroke-width="0.7"/><path d="M474.0 538.3 H485.7 V531.3" fill="none" stroke="#e4e8f0" stroke-width="0.6"/><rect x="496" y="531" width="0.5" height="8" fill="#98a4b8"/><rect x="496.5" y="531" width="0.5" height="8" fill="#e4e9f2"/><rect x="513" y="531" width="0.5" height="8" fill="#98a4b8"/><rect x="513.5" y="531" width="0.5" height="8" fill="#e4e9f2"/><rect x="533.3" y="531" width="0.5" height="8" fill="#98a4b8"/><rect x="533.8" y="531" width="0.5" height="8" fill="#e4e9f2"/><rect x="572.7" y="531" width="0.5" height="8" fill="#98a4b8"/><rect x="573.2" y="531" width="0.5" height="8" fill="#e4e9f2"/><rect x="612.3" y="531" width="0.5" height="8" fill="#98a4b8"/><rect x="612.8" y="531" width="0.5" height="8" fill="#e4e9f2"/><rect x="645.7" y="531" width="0.5" height="8" fill="#98a4b8"/><rect x="646.2" y="531" width="0.5" height="8" fill="#e4e9f2"/><rect x="678.3" y="531" width="0.5" height="8" fill="#98a4b8"/><rect x="678.8" y="531" width="0.5" height="8" fill="#e4e9f2"/></svg>
<div class="t " style="left:334.45px;width:100px;text-align:center;top:531px;transform-origin:50% 0;transform:scaleX(0.840);color:#2a2a2a;">SNAP</div>
<div class="t " style="left:350.65000000000003px;width:100px;text-align:center;top:531px;transform-origin:50% 0;transform:scaleX(0.840);color:#2a2a2a;">GRID</div>
<div class="t " style="left:370.90000000000003px;width:100px;text-align:center;top:531px;transform-origin:50% 0;transform:scaleX(0.840);color:#2a2a2a;">CARTES</div>
<div class="t " style="left:393.05px;width:100px;text-align:center;top:531px;transform-origin:50% 0;transform:scaleX(0.840);color:#2a2a2a;">OSNAP</div>
<div class="t " style="left:413.65000000000003px;width:100px;text-align:center;top:531px;transform-origin:50% 0;transform:scaleX(0.840);color:#2a2a2a;">GLINES</div>
<div class="t " style="left:430.15000000000003px;width:100px;text-align:center;top:531px;transform-origin:50% 0;transform:scaleX(0.840);color:#2a2a2a;">DXF</div>
<div class="b" style="left:0px;top:14px;width:1px;height:526px;background:#2b88d8;"></div>
<div class="b" style="left:719px;top:14px;width:1px;height:526px;background:#2b88d8;"></div>
<div class="b" style="left:0px;top:538px;width:720px;height:1px;background:rgba(43,136,216,0.3);"></div>
<div class="b" style="left:0px;top:539px;width:720px;height:1px;background:#2b88d8;"></div>
</div></body></html>
